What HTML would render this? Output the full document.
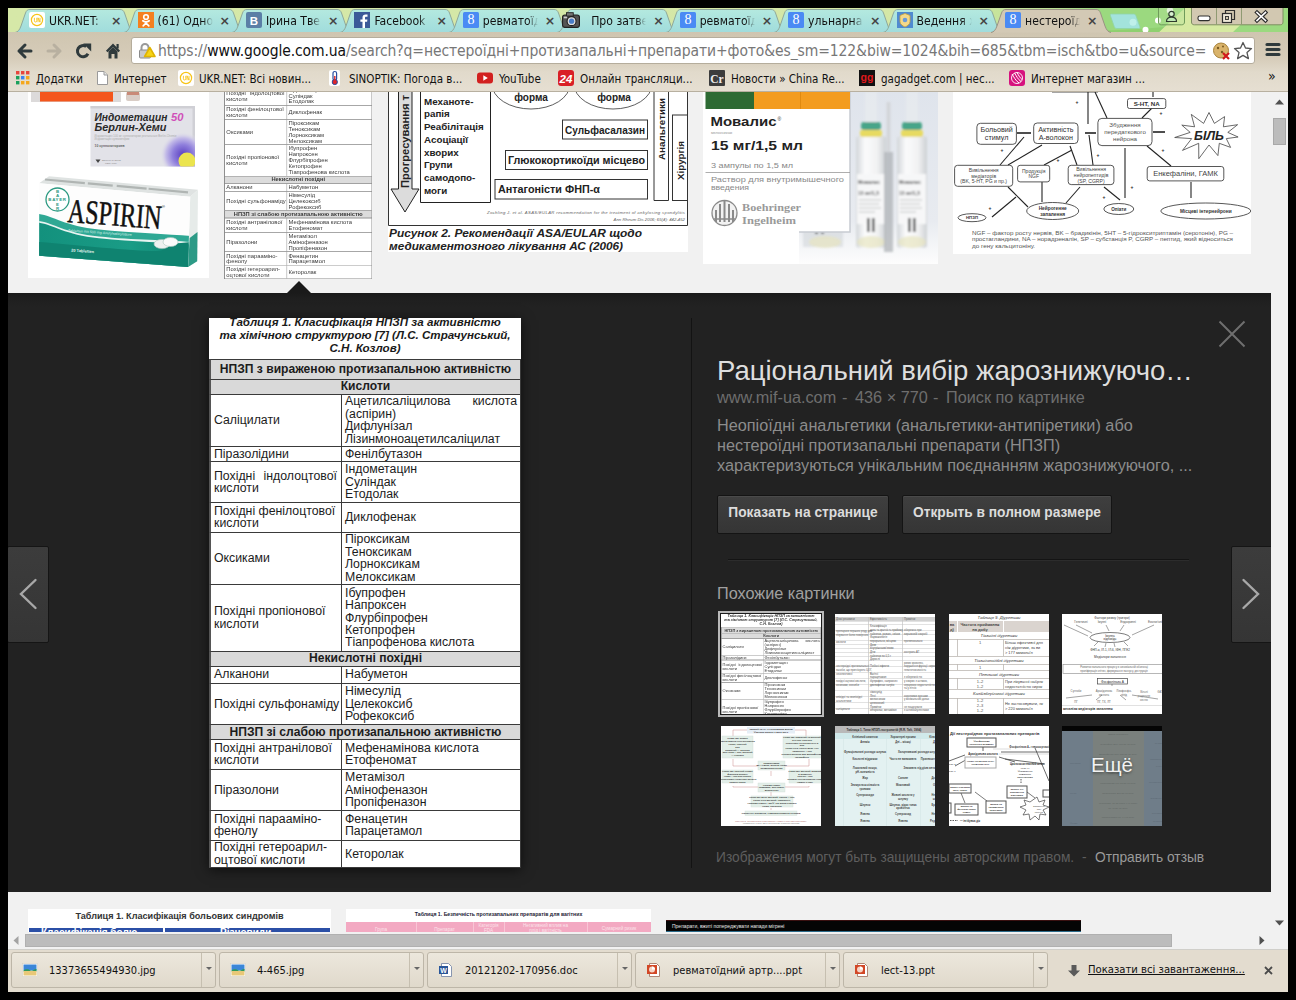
<!DOCTYPE html>
<html lang="uk">
<head>
<meta charset="utf-8">
<title>нестероїдні протизапальні препарати фото</title>
<style>
*{box-sizing:border-box;margin:0;padding:0}
html,body{width:1296px;height:1000px;overflow:hidden;background:#000}
body{position:relative;font-family:"Liberation Sans","DejaVu Sans",sans-serif;color:#000}
.abs{position:absolute}
#win{position:absolute;left:8px;top:8px;width:1280px;height:984px;overflow:hidden;background:#f1f1f1}
/* tab strip */
#tabs{position:absolute;left:0;top:0;width:1280px;height:25px;background:linear-gradient(90deg,#d6e8a8 0,#d4e7a6 900px,#bfe196 1040px,#9bd97f 1090px,#9bd97f 1280px)}
.tab{position:absolute;top:0;height:24px;width:124px}
.ts{position:absolute;left:0;top:0}
.tab .tt{position:absolute;left:34px;top:5.500px;font:12.1px "DejaVu Sans Condensed","DejaVu Sans","Liberation Sans",sans-serif;color:#111;white-space:nowrap;width:55px;overflow:hidden;-webkit-mask-image:linear-gradient(90deg,#000 82%,transparent 100%);mask-image:linear-gradient(90deg,#000 82%,transparent 100%)}
.tab .tx{position:absolute;left:96px;top:5px;font:bold 12.500px "DejaVu Sans","Liberation Sans",sans-serif;color:#444}
.fav{position:absolute;left:14px;top:4px;width:16px;height:16px}
/* toolbar */
#toolbar{position:absolute;left:0;top:24px;width:1280px;height:60px;background:linear-gradient(#cfc5b0 0,#d6ccb9 26px,#e1dacb 40px,#e6dfd2 60px);border-bottom:1px solid #b8b0a0}
#url{position:absolute;left:123px;top:5px;width:1124px;height:26.500px;background:#fff;border:1px solid #b5ad9c;border-radius:3px}
#urltext{position:absolute;left:26px;top:4px;font:15.5px "DejaVu Sans Condensed","DejaVu Sans","Liberation Sans",sans-serif;white-space:nowrap;color:#777;width:1060px;overflow:hidden;letter-spacing:-0.1px}
#urltext b{font-weight:normal;color:#111}
.bm{position:absolute;top:39.500px;font:11.5px "DejaVu Sans Condensed","DejaVu Sans","Liberation Sans",sans-serif;color:#111;white-space:nowrap}
.bmi{position:absolute;top:38px;width:16px;height:16px}
/* page */
#page{position:absolute;left:0;top:84px;width:1263px;height:840px;background:#f1f1f1;overflow:hidden}
#vscroll{position:absolute;left:1263px;top:84px;width:17px;height:840px;background:#f1f1f1}
#hscroll{position:absolute;left:0;top:924px;width:1280px;height:17px;background:#f1f1f1}
#dl{position:absolute;left:0;top:941px;width:1280px;height:43px;background:#e3dccf;border-top:1px solid #d0cfca}
.dli{position:absolute;top:2px;height:36px;border:1px solid #bdb6a8;border-radius:3px;background:linear-gradient(#ece7dc,#e0d9cb)}
.dli .nm{position:absolute;left:37px;top:10.500px;font:11px "DejaVu Sans Condensed","DejaVu Sans","Liberation Sans",sans-serif;color:#111;white-space:nowrap}
.dli .sep{position:absolute;right:13px;top:0;width:1px;height:34px;background:#c6bfb0}
.dli .ar{position:absolute;right:3.500px;top:14px;width:0;height:0;border:3px solid transparent;border-top:3.500px solid #666;border-bottom:0}
.dli .ic{position:absolute;left:10px;top:9px;width:16px;height:16px}
/* dark panel */
#panel{position:absolute;left:0;top:201px;width:1263px;height:599px;background:linear-gradient(#1a1a1a 0,#1f1f1f 6px,#222 14px,#222 100%)}

.bigimg{position:absolute;width:312px;height:550px;background:#fff;overflow:hidden;font:12.3px/12.45px "Liberation Sans",sans-serif;color:#1c1c1c}
.cap{position:absolute;left:0;top:-2px;width:312px;text-align:center;font:italic bold 11.6px/12.8px "Liberation Sans",sans-serif;color:#1a1a1a}
.th{position:absolute;left:0;width:312px;background:#d9d9d9;border:1px solid #3a3a3a;border-left:2px solid #555;font-weight:bold;font-size:12.1px;display:flex;align-items:center;justify-content:center;white-space:nowrap}
.tr{position:absolute;left:0;width:312px;border:1px solid #3a3a3a;border-left:2px solid #555;display:flex}
.c1{width:131px;border-right:1px solid #3a3a3a;padding-left:3px;display:flex;align-items:center;white-space:nowrap}
.c2{padding-left:3px;display:flex;align-items:center;white-space:nowrap}
.c1>div,.c2>div{display:block}
.j{display:inline-block;text-align:justify;text-align-last:justify;white-space:normal;vertical-align:top}
.c1 .j{width:123px}.c2 .j{width:172px}
#ptitle{position:absolute;left:709px;top:62px;font:27.5px/31px "Liberation Sans",sans-serif;color:#dedede;white-space:nowrap}
#psub{position:absolute;left:709px;top:94.5px;font:16.25px/18px "Liberation Sans",sans-serif;color:#6e6e6e;white-space:nowrap}
#psub span{position:absolute;top:0}
#pdesc{position:absolute;left:709px;top:121.5px;width:490px;font:16.25px/20.2px "Liberation Sans",sans-serif;color:#8c8c8c;white-space:nowrap}
.pbtn{position:absolute;top:202px;height:39px;border:1px solid #141414;border-radius:2px;background:linear-gradient(#3f3f3f,#353535);box-shadow:inset 0 1px 0 #4a4a4a;color:#dcdcdc;font:bold 13.75px/34px "Liberation Sans",sans-serif;text-align:center;white-space:nowrap}
#phr{position:absolute;left:720px;top:266px;width:461px;height:2px;background:#141414;border-bottom:1px solid #2c2c2c}
#psim{position:absolute;left:709px;top:291px;font:16.25px/18px "Liberation Sans",sans-serif;color:#a0a0a0;white-space:nowrap}
#pfoot{position:absolute;left:708px;top:557px;font:13.75px/16px "Liberation Sans",sans-serif;color:#5e5e5e;white-space:nowrap}
#pfoot span{position:absolute;top:0}
.nav{position:absolute;top:252.500px;width:42px;height:97px;background:linear-gradient(#3c3c3c,#353535);border:1px solid #151515;border-radius:2px}
.sth{position:absolute;width:100px;height:100px;background:#fff;overflow:hidden}
.mini .th,.mini .tr,.mini .c1{border-color:#8a8a8a}.mini .bigimg{color:#3a3a3a}.mini .cap{color:#333}.mini .th{background:#dcdcdc}
</style>
</head>
<body>
<div id="win">
  <div id="tabs"><svg width="0" height="0" style="position:absolute"><defs><linearGradient id="tg" x1="0" y1="0" x2="0" y2="1"><stop offset="0" stop-color="#b4e9df"/><stop offset="1" stop-color="#a0dcdc"/></linearGradient></defs></svg>
<!--TABS-->
<div class="tab" style="left:7.0px;"><svg class="ts" width="121" height="25" viewBox="0 0 121 25"><path d="M0 24.500C3 24 4.500 22 6 18L10.500 5C11.500 2.500 12.500 1.500 15 1.500H105C107.500 1.500 108.500 2.500 109.500 5L114 18C115.500 22 117 24 120 24.500" fill="url(#tg)" stroke="#8fa89a" stroke-width="1"/></svg><svg class="fav" viewBox="0 0 16 16"><rect width="16" height="16" rx="2" fill="#fff"/><circle cx="8" cy="8" r="5.6" fill="none" stroke="#f7c417" stroke-width="1.2"/><path d="M5.4 5.8v3a1.2 1.2 0 0 0 2.4 0v-3M9 10.2V5.800l2 4.400V5.800" fill="none" stroke="#f7c417" stroke-width="0.9"/></svg><div class="tt">UKR.NET:</div><div class="tx">×</div></div>
<div class="tab" style="left:115.5px;"><svg class="ts" width="121" height="25" viewBox="0 0 121 25"><path d="M0 24.500C3 24 4.500 22 6 18L10.500 5C11.500 2.500 12.500 1.500 15 1.500H105C107.500 1.500 108.500 2.500 109.500 5L114 18C115.500 22 117 24 120 24.500" fill="url(#tg)" stroke="#8fa89a" stroke-width="1"/></svg><svg class="fav" viewBox="0 0 16 16"><rect width="16" height="16" fill="#f4801f"/><circle cx="8" cy="5" r="2.3" fill="none" stroke="#fff" stroke-width="1.6"/><path d="M4.800 8.800c2 1.400 4.400 1.400 6.400 0M8 10v1.200M8 11l-2.800 2.800M8 11l2.800 2.800" fill="none" stroke="#fff" stroke-width="1.7" stroke-linecap="round"/></svg><div class="tt">(61) Одно</div><div class="tx">×</div></div>
<div class="tab" style="left:223.9px;"><svg class="ts" width="121" height="25" viewBox="0 0 121 25"><path d="M0 24.500C3 24 4.500 22 6 18L10.500 5C11.500 2.500 12.500 1.500 15 1.500H105C107.500 1.500 108.500 2.500 109.500 5L114 18C115.500 22 117 24 120 24.500" fill="url(#tg)" stroke="#8fa89a" stroke-width="1"/></svg><svg class="fav" viewBox="0 0 16 16"><rect width="16" height="16" rx="2" fill="#5b7fa6"/><text x="8" y="12.500" font-family="Liberation Sans,sans-serif" font-weight="bold" font-size="11.500" fill="#fff" text-anchor="middle">B</text></svg><div class="tt">Ірина Твер</div><div class="tx">×</div></div>
<div class="tab" style="left:332.4px;"><svg class="ts" width="121" height="25" viewBox="0 0 121 25"><path d="M0 24.500C3 24 4.500 22 6 18L10.500 5C11.500 2.500 12.500 1.500 15 1.500H105C107.500 1.500 108.500 2.500 109.500 5L114 18C115.500 22 117 24 120 24.500" fill="url(#tg)" stroke="#8fa89a" stroke-width="1"/></svg><svg class="fav" viewBox="0 0 16 16"><rect width="16" height="16" fill="#3b5998"/><path d="M11 16V9.800h2.100l.3-2.400H11V5.900c0-.7.200-1.200 1.200-1.200h1.300V2.500c-.2 0-1-.1-1.900-.1-1.900 0-3.100 1.100-3.100 3.200v1.800H6.400v2.400h2.100V16z" fill="#fff"/></svg><div class="tt">Facebook</div><div class="tx">×</div></div>
<div class="tab" style="left:440.8px;"><svg class="ts" width="121" height="25" viewBox="0 0 121 25"><path d="M0 24.500C3 24 4.500 22 6 18L10.500 5C11.500 2.500 12.500 1.500 15 1.500H105C107.500 1.500 108.500 2.500 109.500 5L114 18C115.500 22 117 24 120 24.500" fill="url(#tg)" stroke="#8fa89a" stroke-width="1"/></svg><svg class="fav" viewBox="0 0 16 16"><rect width="16" height="16" rx="1.500" fill="#4a8af4"/><text x="8" y="12.300" font-family="Liberation Serif,serif" font-size="14" fill="#fff" text-anchor="middle">8</text></svg><div class="tt">ревматоїд</div><div class="tx">×</div></div>
<div class="tab" style="left:549.2px;"><svg class="ts" width="121" height="25" viewBox="0 0 121 25"><path d="M0 24.500C3 24 4.500 22 6 18L10.500 5C11.500 2.500 12.500 1.500 15 1.500H105C107.500 1.500 108.500 2.500 109.500 5L114 18C115.500 22 117 24 120 24.500" fill="url(#tg)" stroke="#8fa89a" stroke-width="1"/></svg><svg class="fav" viewBox="0 0 16 16" style="left:5px;width:18px;height:18px;top:3px"><rect x="0.500" y="3.500" width="15" height="11" rx="2" fill="#555" stroke="#222"/><rect x="4" y="1.500" width="6" height="3" fill="#777" stroke="#222" stroke-width=".8"/><circle cx="8.500" cy="9" r="4" fill="#ddd" stroke="#222"/><circle cx="8.500" cy="9" r="2.300" fill="#4a7ec8"/><rect x="1.500" y="5" width="3" height="1.500" fill="#ccc"/></svg><div class="tt">Про затве</div><div class="tx">×</div></div>
<div class="tab" style="left:657.7px;"><svg class="ts" width="121" height="25" viewBox="0 0 121 25"><path d="M0 24.500C3 24 4.500 22 6 18L10.500 5C11.500 2.500 12.500 1.500 15 1.500H105C107.500 1.500 108.500 2.500 109.500 5L114 18C115.500 22 117 24 120 24.500" fill="url(#tg)" stroke="#8fa89a" stroke-width="1"/></svg><svg class="fav" viewBox="0 0 16 16"><rect width="16" height="16" rx="1.500" fill="#4a8af4"/><text x="8" y="12.300" font-family="Liberation Serif,serif" font-size="14" fill="#fff" text-anchor="middle">8</text></svg><div class="tt">ревматоїд</div><div class="tx">×</div></div>
<div class="tab" style="left:766.1px;"><svg class="ts" width="121" height="25" viewBox="0 0 121 25"><path d="M0 24.500C3 24 4.500 22 6 18L10.500 5C11.500 2.500 12.500 1.500 15 1.500H105C107.500 1.500 108.500 2.500 109.500 5L114 18C115.500 22 117 24 120 24.500" fill="url(#tg)" stroke="#8fa89a" stroke-width="1"/></svg><svg class="fav" viewBox="0 0 16 16"><rect width="16" height="16" rx="1.500" fill="#4a8af4"/><text x="8" y="12.300" font-family="Liberation Serif,serif" font-size="14" fill="#fff" text-anchor="middle">8</text></svg><div class="tt">ульнарна</div><div class="tx">×</div></div>
<div class="tab" style="left:874.6px;"><svg class="ts" width="121" height="25" viewBox="0 0 121 25"><path d="M0 24.500C3 24 4.500 22 6 18L10.500 5C11.500 2.500 12.500 1.500 15 1.500H105C107.500 1.500 108.500 2.500 109.500 5L114 18C115.500 22 117 24 120 24.500" fill="url(#tg)" stroke="#8fa89a" stroke-width="1"/></svg><svg class="fav" viewBox="0 0 16 16"><rect width="16" height="16" fill="#4f8ad0"/><path d="M8 1.500l5 2v6c0 3-3 4.500-5 5.500-2-1-5-2.500-5-5.500v-6z" fill="#f4d98a" stroke="#c9a23a" stroke-width=".8"/><circle cx="8" cy="8" r="2.300" fill="#6a9ad8"/></svg><div class="tt">Ведення х</div><div class="tx">×</div></div>
<div class="tab" style="left:983.1px;z-index:5;"><svg class="ts" width="121" height="25" viewBox="0 0 121 25"><path d="M0 24.500C3 24 4.500 22 6 18L10.500 5C11.500 2.500 12.500 1.500 15 1.500H105C107.500 1.500 108.500 2.500 109.500 5L114 18C115.500 22 117 24 120 24.500" fill="#d3c9b5" stroke="#9a9384" stroke-width="1"/></svg><svg class="fav" viewBox="0 0 16 16"><rect width="16" height="16" rx="1.500" fill="#4a8af4"/><text x="8" y="12.300" font-family="Liberation Serif,serif" font-size="14" fill="#fff" text-anchor="middle">8</text></svg><div class="tt">нестероїд</div><div class="tx">×</div></div>
<!--/TABS-->

<svg class="abs" style="left:1096px;top:0" width="184" height="25" viewBox="0 0 184 25">
  <rect x="-40" width="224" height="25" fill="#9bd97f"/>
  <path d="M54 25H128L154 0H81z" fill="#d6eaa2"/>
  <path d="M-40 25C-10 25 20 25 54 25L60 19C30 22 0 23 -40 23z" fill="#8fd070"/>
  <circle cx="66" cy="2.500" r="3.200" fill="#fff"/><circle cx="54" cy="12.600" r="3" fill="#fff"/><circle cx="41.500" cy="21.800" r="3" fill="#fff"/>
  <path d="M7.500 6H29.500C30.800 6 31.500 6.500 32 7.800L35.800 18.500C36.300 20 35.800 20.500 34.500 20.500H12.800C11.500 20.500 10.800 20 10.300 18.700L6.500 8C6 6.500 6.300 6 7.500 6z" fill="#a3e3dc" stroke="#8fd4a8" stroke-width=".8"/><circle cx="29" cy="14.200" r="3.500" fill="#bff0ea"/>
  <path d="M54.500 0V14c0 1.800 1 2.800 2.800 2.800H77.700c1.800 0 2.800-1 2.800-2.800V0" fill="#b5e39a" fill-opacity=".35" stroke="#6f9a5a" stroke-width="1"/>
  <circle cx="67.500" cy="6" r="2.700" fill="#d9f2d2" stroke="#2e3a2e" stroke-width="1.200"/><path d="M62.500 13.500c0-3.200 2.200-4.300 5-4.300s5 1.100 5 4.300z" fill="#bfe8b5" stroke="#2e3a2e" stroke-width="1.200" stroke-linejoin="round"/>
  <path d="M87.500 0V14c0 1.800 1 2.800 2.800 2.800H176.200c1.800 0 2.800-1 2.800-2.800V0" fill="#d2c8b1" stroke="#7f8f62" stroke-width="1"/>
  <path d="M112.500 0v16.500M137.500 0v16.500" stroke="#8f9a72" stroke-width="1"/>
  <rect x="94" y="8" width="12" height="4.600" rx="1.800" fill="#fff" stroke="#2e2e2e" stroke-width="1.100"/>
  <path d="M121.500 5.500v-3h9v9h-3" fill="none" stroke="#2e2e2e" stroke-width="1.200"/><rect x="118.500" y="5.500" width="9" height="9" fill="#efe9da" stroke="#2e2e2e" stroke-width="1.200"/><rect x="121.500" y="8.500" width="3" height="3" fill="#d2c8b1" stroke="#2e2e2e" stroke-width=".9"/>
  <path d="M153 4.500l8.500 8M161.500 4.500l-8.500 8" stroke="#2e2e2e" stroke-width="3.800" stroke-linecap="square"/><path d="M153 4.500l8.500 8M161.500 4.500l-8.500 8" stroke="#fff" stroke-width="1.600" stroke-linecap="square"/>
</svg>
</div>
  <div id="toolbar">
    <svg class="abs" style="left:8px;top:8.500px" width="112" height="20" viewBox="0 0 112 20">
      <path d="M3 10h12M3 10l6-6M3 10l6 6" fill="none" stroke="#2f3a3c" stroke-width="3" stroke-linecap="round" stroke-linejoin="round"/>
      <path d="M32 10h12M44 10l-6-6M44 10l-6 6" fill="none" stroke="#b8b0a0" stroke-width="3" stroke-linecap="round" stroke-linejoin="round"/>
      <g transform="translate(-4.300 0)"><path d="M76.300 12.800A5.600 5.600 0 1 1 74.500 5.500" fill="none" stroke="#2f3a3c" stroke-width="3"/>
      <path d="M71.500 2.500H79.500V10.500z" fill="#2f3a3c"/></g>
      <path d="M90.800 10.500L97 4.300l6.200 6.200" fill="none" stroke="#2f3a3c" stroke-width="2.400" stroke-linejoin="miter"/>
      <path d="M92.500 10.500l4.500-4.300 4.500 4.300V17.500h-3v-4.500h-3v4.500H92.500z" fill="#2f3a3c"/>
      <rect x="100.500" y="3" width="2.200" height="4.500" fill="#2f3a3c"/>
    </svg>
    <svg class="abs" style="left:1257px;top:9px" width="16" height="18" viewBox="0 0 16 18"><path d="M2 3.500h12M2 8.500h12M2 13.500h12" stroke="#2f3a3c" stroke-width="3.200" stroke-linecap="round"/></svg>
<svg class="bmi" style="left:8px" viewBox="0 0 16 16"><g><rect x="0" y="1" width="3.400" height="3.400" fill="#e8453c"/><rect x="5" y="1" width="3.400" height="3.400" fill="#e8453c"/><rect x="10" y="1" width="3.400" height="3.400" fill="#e8453c"/><rect x="0" y="6" width="3.400" height="3.400" fill="#1aa05b"/><rect x="5" y="6" width="3.400" height="3.400" fill="#3d83f0"/><rect x="10" y="6" width="3.400" height="3.400" fill="#f4a71c"/><rect x="0" y="11" width="3.400" height="3.400" fill="#1aa05b"/><rect x="5" y="11" width="3.400" height="3.400" fill="#f4a71c"/><rect x="10" y="11" width="3.400" height="3.400" fill="#f4a71c"/></g></svg><div class="bm" style="left:28px">Додатки</div>
<svg class="bmi" style="left:88px" viewBox="0 0 16 16"><path d="M1.500 1.500h6.500l3.500 3.500v9.500h-10z" fill="#fff" stroke="#9a9a9a"/><path d="M8 1.500v3.500h3.500" fill="#e6e6e6" stroke="#9a9a9a"/></svg><div class="bm" style="left:106px">Интернет</div>
<svg class="bmi" style="left:170px" viewBox="0 0 16 16"><rect width="16" height="16" rx="2" fill="#fff"/><circle cx="8" cy="8" r="5.600" fill="none" stroke="#f7c417" stroke-width="1.200"/><path d="M5.400 5.800v3a1.200 1.200 0 0 0 2.400 0v-3M9 10.200V5.800l2 4.400V5.800" fill="none" stroke="#f7c417" stroke-width="0.900"/></svg><div class="bm" style="left:191px">UKR.NET: Всі новин...</div>
<svg class="bmi" style="left:320px" viewBox="0 0 16 16"><rect x="1" y="0" width="11" height="16" rx="2" fill="#fff"/><rect x="5" y="1.500" width="3.600" height="9" rx="1.800" fill="#fff" stroke="#2a4fa0" stroke-width="1.200"/><circle cx="6.800" cy="12" r="2.600" fill="#e0262b" stroke="#2a4fa0" stroke-width="1"/><rect x="6.100" y="6" width="1.400" height="5" fill="#e0262b"/></svg><div class="bm" style="left:341px">SINOPTIK: Погода в...</div>
<svg class="bmi" style="left:469px" viewBox="0 0 16 16"><rect x="0" y="2.500" width="16" height="11" rx="3" fill="#d2201f"/><path d="M6.300 5.200l4.500 2.800-4.500 2.800z" fill="#fff"/></svg><div class="bm" style="left:491px">YouTube</div>
<svg class="bmi" style="left:550px" viewBox="0 0 16 16"><rect width="16" height="16" rx="3" fill="#d91f26"/><text x="8" y="12.500" font-family="Liberation Sans,sans-serif" font-weight="bold" font-style="italic" font-size="11.500" fill="#fff" text-anchor="middle">24</text></svg><div class="bm" style="left:572px">Онлайн трансляци...</div>
<svg class="bmi" style="left:701px" viewBox="0 0 16 16"><rect width="16" height="16" rx="1" fill="#3c3c3c"/><text x="8" y="12.500" font-family="Liberation Serif,serif" font-weight="bold" font-size="11.500" fill="#eee" text-anchor="middle">Cr</text></svg><div class="bm" style="left:723px">Новости » China Re...</div>
<svg class="bmi" style="left:851px" viewBox="0 0 16 16"><rect width="16" height="16" fill="#111"/><text x="8" y="11" font-family="Liberation Sans,sans-serif" font-weight="bold" font-size="10.500" fill="#e0181c" text-anchor="middle">gg</text></svg><div class="bm" style="left:873px">gagadget.com | нес...</div>
<svg class="bmi" style="left:1001px" viewBox="0 0 16 16"><rect width="16" height="16" rx="3" fill="#d6127e"/><path d="M3 4c2 3 3 6 7 9M5.500 3c2 3 3 6 6.500 8.500M8 2.500c1.500 2.500 2.500 5 5 7" fill="none" stroke="#fff" stroke-width="1"/><circle cx="8" cy="8" r="5.500" fill="none" stroke="#fff" stroke-width=".9"/></svg><div class="bm" style="left:1023px">Интернет магазин ...</div>
<div class="bm" style="left:1260px;top:36px;font-size:14px">»</div>

    <div id="url"><svg class="abs" style="left:5px;top:4px" width="20" height="18" viewBox="0 0 20 18"><path d="M4.500 8V5.500a3.500 3.500 0 0 1 7 0V8" fill="none" stroke="#9a9a9a" stroke-width="2"/><rect x="2.500" y="8" width="11" height="8" rx="1" fill="#c9c9c9" stroke="#8a8a8a"/><path d="M12.800 5.500l5.200 9h-10.400z" fill="#f7d417" stroke="#e0b400" stroke-width="1.600" stroke-linejoin="round"/></svg>
<svg class="abs" style="left:1080px;top:3px" width="42" height="20" viewBox="0 0 42 20"><circle cx="9" cy="9.500" r="7.500" fill="#d9b36a" stroke="#a8823a"/><circle cx="6" cy="7" r="1.200" fill="#7a5a22"/><circle cx="10" cy="11" r="1.200" fill="#7a5a22"/><circle cx="11" cy="5.500" r="1" fill="#7a5a22"/><path d="M11 12l6 6M17 12l-6 6" stroke="#d0181b" stroke-width="2.200"/><path d="M31 1.500l2.500 5.500 6 .6-4.500 4 1.400 6-5.400-3.200-5.400 3.200 1.400-6-4.500-4 6-.6z" fill="#fff" stroke="#555" stroke-width="1.300" stroke-linejoin="round"/></svg><div id="urltext">https://<b>www.google.com.ua</b>/search?q=нестероїдні+протизапальні+препарати+фото&amp;es_sm=122&amp;biw=1024&amp;bih=685&amp;tbm=isch&amp;tbo=u&amp;source=</div></div>
  </div>
  <div id="page">
<!--TOP-->
<svg class="abs" style="left:20px;top:0px" width="181" height="186" viewBox="0 0 181 186" font-family="Liberation Sans,sans-serif"><defs><radialGradient id="pg" cx=".5" cy=".5" r=".5"><stop offset="0" stop-color="#5a3fc0"/><stop offset=".45" stop-color="#8f7fdc"/><stop offset=".75" stop-color="#c4bce8"/><stop offset="1" stop-color="#e2e2e8" stop-opacity="0"/></radialGradient><linearGradient id="ag" x1="0" y1="0" x2="1" y2="0"><stop offset="0" stop-color="#13917d"/><stop offset=".6" stop-color="#1a9c86"/><stop offset="1" stop-color="#0f826f"/></linearGradient></defs><rect width="181" height="186" fill="#fff"/><rect x="3" y="0" width="90" height="10" fill="#dcdada"/><rect x="12" y="0" width="73" height="9.500" fill="#f4561c"/><rect x="98" y="0" width="14" height="9" rx="2" fill="#d9cdc6"/><rect x="99" y="0" width="12" height="3" fill="#c98a78"/><clipPath id="ib"><rect x="62.500" y="14" width="104.500" height="60.500"/></clipPath><rect x="62.500" y="14" width="104.500" height="60.500" fill="#e2e2e8"/><rect x="62.500" y="14" width="104.500" height="2.500" fill="#cfcfd4"/><rect x="164.500" y="14" width="2.500" height="60.500" fill="#d0d0d6"/><g clip-path="url(#ib)"><circle cx="155" cy="63" r="23" fill="url(#pg)"/><circle cx="159" cy="69" r="8.500" fill="#ebe44e"/></g><text x="66.500" y="29" font-size="10" font-weight="bold" font-style="italic" fill="#2a2a2a" textLength="73" lengthAdjust="spacingAndGlyphs">Индометацин</text><text x="143" y="29" font-size="10" font-weight="bold" font-style="italic" fill="#d050b8" textLength="12.500" lengthAdjust="spacingAndGlyphs">50</text><text x="66.500" y="38.700" font-size="10" font-weight="bold" font-style="italic" fill="#2a2a2a" textLength="72" lengthAdjust="spacingAndGlyphs">Берлин-Хеми</text><text x="66.500" y="44.500" font-size="2.700" fill="#aaa" textLength="82">Индометацин 100 мг суппозитории ректальные Berlin-Chemie</text><text x="66.500" y="47.800" font-size="2.700" fill="#aaa">Индометацин суппозитории</text><text x="66.500" y="54.500" font-size="3.400" font-weight="bold" fill="#666">10 суппозиториев</text><path d="M67.500 67.500l2.500 3.500 2.500-3.500z" fill="#444"/><text x="74" y="68.500" font-size="2.400" fill="#888">BERLIN-CHEMIE</text><text x="77" y="71.500" font-size="2.400" fill="#888">MENARINI</text><path d="M11.200 91.300L21 84.300 170 97.700 162.200 104.700z" fill="#dfe3e2"/><path d="M17 87.500L160 100.300" stroke="#8a908e" stroke-width="2.200" stroke-dasharray="40 3 25 4 30 2" opacity=".55"/><path d="M162.200 104.700L170 97.700 169.200 169.300 160 175z" fill="#e6ebe9"/><path d="M161.700 146L169.500 140 169.200 169.300 160 175z" fill="#2c9a86"/><path d="M11.200 91.300L162.200 104.700 160 175 11.200 163.700z" fill="#fdfdfd"/><clipPath id="af"><path d="M11.200 91.300L162.200 104.700 160 175 11.200 163.700z"/></clipPath><g clip-path="url(#af)"><path d="M11 122c14 2 26 12 60 15.500S140 142 163 144v35H11z" fill="#2fa894"/><path d="M11 129c14 2 26 12 60 15.500S140 148 163 150v30H11z" fill="#e8f4f1"/><path d="M11 130.800c14 2 26 12 60 15.500S140 150.500 163 152.500v30H11z" fill="url(#ag)"/><path d="M11 150c40 3 90 9 118 9 8 0 10-5 14-7l20-2v30H11z" fill="#0f8370"/></g><ellipse cx="134" cy="152" rx="8" ry="4.600" fill="#eef1f0" stroke="#a9c4bc" stroke-width=".6"/><ellipse cx="142.500" cy="150" rx="7.500" ry="4.500" fill="#fafafa" stroke="#a9c4bc" stroke-width=".6"/><circle cx="29.500" cy="107.500" r="11.500" fill="#fff" stroke="#2c9a82" stroke-width="1.300"/><text x="29.500" y="109" font-size="4.400" font-weight="bold" fill="#2c9a82" text-anchor="middle" letter-spacing=".7">BAYER</text><text font-size="4.400" font-weight="bold" fill="#2c9a82" text-anchor="middle"><tspan x="29.500" y="100.500">B</tspan><tspan x="29.500" y="104.700">A</tspan><tspan x="29.500" y="113.500">E</tspan><tspan x="29.500" y="117.800">R</tspan></text><text x="39" y="130" font-family="Liberation Serif,serif" font-size="34" fill="#111" stroke="#111" stroke-width=".5" textLength="94" lengthAdjust="spacingAndGlyphs" transform="rotate(4.300 39 130)">ASPIRIN</text><text x="134" y="116" font-size="4" fill="#111">®</text><text x="40" y="139.500" font-size="3.600" fill="#d8f0ea" transform="rotate(4 40 139)" textLength="64">Tabletten mit 500 mg Acetylsalicylsäure</text><text x="43" y="159.500" font-size="4" font-weight="bold" fill="#e4f4f0" transform="rotate(4 43 159)">20 Tabletten</text></svg>
<div class="abs mini" style="left:216px;top:0;width:148px;height:186.500px;overflow:hidden;background:#fff"><div class="bigimg" style="left:0;top:-74.500px;transform:scale(.4744);transform-origin:0 0"><div class="cap">Таблиця 1. Класифікація НПЗП за активністю<br>та хімічною структурою [7] (Л.С. Страчунський,<br>С.Н. Козлов)</div>
<div class="th" style="top:40.5px;height:21.2px">НПЗП з вираженою протизапальною активністю</div>
<div class="th" style="top:60.7px;height:15.9px">Кислоти</div>
<div class="tr" style="top:75.6px;height:53.4px"><div class="c1"><div>Саліцилати</div></div><div class="c2"><div><span class=j>Ацетилсаліцилова кислота</span><br>(аспірин)<br>Дифлунізал<br>Лізинмоноацетилсаліцилат</div></div></div>
<div class="tr" style="top:128.0px;height:16.4px"><div class="c1"><div>Піразолідини</div></div><div class="c2"><div>Фенілбутазон</div></div></div>
<div class="tr" style="top:143.4px;height:41.2px"><div class="c1"><div><span class=j>Похідні індолоцтової</span><br>кислоти</div></div><div class="c2"><div>Індометацин<br>Суліндак<br>Етодолак</div></div></div>
<div class="tr" style="top:183.6px;height:31.0px"><div class="c1"><div>Похідні фенілоцтової<br>кислоти</div></div><div class="c2"><div>Диклофенак</div></div></div>
<div class="tr" style="top:213.6px;height:53.4px"><div class="c1"><div>Оксиками</div></div><div class="c2"><div>Піроксикам<br>Теноксикам<br>Лорноксикам<br>Мелоксикам</div></div></div>
<div class="tr" style="top:266.0px;height:67.5px"><div class="c1"><div>Похідні пропіонової<br>кислоти</div></div><div class="c2"><div>Ібупрофен<br>Напроксен<br>Флурбіпрофен<br>Кетопрофен<br>Тіапрофенова кислота</div></div></div>
<div class="th" style="top:332.5px;height:16.3px">Некислотні похідні</div>
<div class="tr" style="top:347.8px;height:17.8px"><div class="c1"><div>Алканони</div></div><div class="c2"><div>Набуметон</div></div></div>
<div class="tr" style="top:364.6px;height:42.4px"><div class="c1"><div>Похідні сульфонаміду</div></div><div class="c2"><div>Німесулід<br>Целекоксиб<br>Рофекоксиб</div></div></div>
<div class="th" style="top:406.0px;height:16.0px">НПЗП зі слабою протизапальною активністю</div>
<div class="tr" style="top:421.0px;height:30.7px"><div class="c1"><div>Похідні антранілової<br>кислоти</div></div><div class="c2"><div>Мефенамінова кислота<br>Етофеномат</div></div></div>
<div class="tr" style="top:450.7px;height:42.1px"><div class="c1"><div>Піразолони</div></div><div class="c2"><div>Метамізол<br>Амінофеназон<br>Пропіфеназон</div></div></div>
<div class="tr" style="top:491.8px;height:30.8px"><div class="c1"><div>Похідні парааміно-<br>фенолу</div></div><div class="c2"><div>Фенацетин<br>Парацетамол</div></div></div>
<div class="tr" style="top:521.6px;height:28.4px"><div class="c1"><div>Похідні гетероарил-<br>оцтової кислоти</div></div><div class="c2"><div>Кеторолак</div></div></div>
</div></div>
<svg class="abs" style="left:380px;top:0px" width="300" height="160" viewBox="0 0 300 160" font-family="Liberation Sans,sans-serif"><rect width="300" height="160" fill="#fff"/><path d="M0.500 0V133.500H299.500V0" fill="none" stroke="#333" stroke-width="1"/><path d="M10.500 0V97H3L17 120 31 97H24V0" fill="#dcdcdc" stroke="#222" stroke-width="1"/><text transform="translate(21 96) rotate(-90)" font-size="10.500" font-weight="bold" fill="#222" textLength="93" lengthAdjust="spacingAndGlyphs">Прогресування т</text><path d="M32.500 0V110.500H102.500V0" fill="none" stroke="#222" stroke-width="1"/><text x="36" y="12.5" font-size="9.800" font-weight="bold" fill="#222">Механоте-</text><text x="36" y="25.2" font-size="9.800" font-weight="bold" fill="#222">рапія</text><text x="36" y="38.0" font-size="9.800" font-weight="bold" fill="#222">Реабілітація</text><text x="36" y="50.8" font-size="9.800" font-weight="bold" fill="#222">Асоціації</text><text x="36" y="63.5" font-size="9.800" font-weight="bold" fill="#222">хворих</text><text x="36" y="76.2" font-size="9.800" font-weight="bold" fill="#222">Групи</text><text x="36" y="89.0" font-size="9.800" font-weight="bold" fill="#222">самодопо-</text><text x="36" y="101.8" font-size="9.800" font-weight="bold" fill="#222">моги</text><ellipse cx="143" cy="-8" rx="39" ry="25" fill="none" stroke="#333" stroke-width=".8"/><ellipse cx="225" cy="-8" rx="39" ry="25" fill="none" stroke="#333" stroke-width=".8"/><text x="143" y="8.500" font-size="10" font-weight="bold" fill="#222" text-anchor="middle">форма</text><text x="226" y="8.500" font-size="10" font-weight="bold" fill="#222" text-anchor="middle">форма</text><rect x="174.500" y="28" width="85" height="19" fill="#fff" stroke="#333" stroke-width="1"/><text x="217" y="41.500" font-size="10" font-weight="bold" fill="#222" text-anchor="middle" textLength="80" lengthAdjust="spacingAndGlyphs">Сульфасалазин</text><rect x="117.500" y="58.500" width="142" height="19" fill="#fff" stroke="#333" stroke-width="1"/><text x="188.500" y="72" font-size="10" font-weight="bold" fill="#222" text-anchor="middle" textLength="137" lengthAdjust="spacingAndGlyphs">Глюкокортикоїди місцево</text><rect x="107" y="87.500" width="152.500" height="19.500" fill="#fff" stroke="#333" stroke-width="1"/><text x="110" y="101" font-size="10" font-weight="bold" fill="#222" textLength="102" lengthAdjust="spacingAndGlyphs">Антагоністи ФНП-α</text><path d="M266 0V108.500H280.500V0" fill="none" stroke="#333" stroke-width="1"/><text transform="translate(277 68) rotate(-90)" font-size="9.500" font-weight="bold" fill="#222" textLength="62" lengthAdjust="spacingAndGlyphs">Анальгетики</text><rect x="284.500" y="23" width="15" height="85.500" fill="#fff" stroke="#333" stroke-width="1"/><text transform="translate(296 88) rotate(-90)" font-size="9.500" font-weight="bold" fill="#222" textLength="39" lengthAdjust="spacingAndGlyphs">Хірургія</text><text x="297" y="122" font-size="4.300" font-style="italic" fill="#666" text-anchor="end" textLength="198">Zochling J. et al. ASAS/EULAR recommendation for the treatment of ankylosing spondylitis</text><text x="297" y="128.500" font-size="4.300" font-style="italic" fill="#666" text-anchor="end">Ann Rheum Dis 2006; 65(4): 442-452</text><text x="1" y="145" font-size="11.300" font-weight="bold" font-style="italic" fill="#222" textLength="253" lengthAdjust="spacingAndGlyphs">Рисунок 2. Рекомендації ASA/EULAR щодо</text><text x="1" y="157.500" font-size="11.300" font-weight="bold" font-style="italic" fill="#222" textLength="234" lengthAdjust="spacingAndGlyphs">медикаментозного лікування АС (2006)</text></svg>
<svg class="abs" style="left:695px;top:0px" width="235" height="172" viewBox="0 0 235 172" font-family="Liberation Sans,sans-serif"><defs><linearGradient id="mb" x1="0" y1="0" x2="0" y2="1"><stop offset="0" stop-color="#dfe4ec"/><stop offset=".75" stop-color="#e8ebf0"/><stop offset="1" stop-color="#fdfdfd"/></linearGradient><linearGradient id="amp" x1="0" y1="0" x2="1" y2="0"><stop offset="0" stop-color="#cfd3d6"/><stop offset=".3" stop-color="#fff"/><stop offset=".7" stop-color="#f4f4f4"/><stop offset="1" stop-color="#c9cdd0"/></linearGradient></defs><rect width="235" height="172" fill="#fff"/><rect x="96" y="0" width="139" height="172" fill="url(#mb)"/><filter id="bl" x="-10%" y="-10%" width="120%" height="120%"><feGaussianBlur stdDeviation="1.1"/></filter><g filter="url(#bl)" opacity=".85"><rect x="162" y="0" width="12" height="34" fill="#e9ecef" opacity=".8"/><rect x="153" y="44" width="30" height="112" rx="3" fill="url(#amp)"/><rect x="158" y="30" width="20" height="8" rx="3" fill="#2f9a78"/><rect x="157" y="38" width="22" height="7" rx="2" fill="#e9d94a"/><rect x="154" y="82" width="28" height="50" fill="#fafafa"/><text x="155" y="92" font-size="5" font-weight="bold" fill="#333">Мовалис</text><text x="155" y="103" font-size="5" font-weight="bold" fill="#333">15 мг/1,5</text><path d="M156 108h22M156 112h20M156 116h22M156 120h16" stroke="#bbb" stroke-width="1"/><rect x="164" y="126" width="2.500" height="14" fill="#222"/><rect x="169" y="126" width="2.500" height="14" fill="#222"/><ellipse cx="168" cy="150" rx="14" ry="6" fill="#e6e2b8" opacity=".7"/><rect x="203" y="0" width="12" height="34" fill="#e9ecef" opacity=".8"/><rect x="194" y="44" width="30" height="112" rx="3" fill="url(#amp)"/><rect x="199" y="30" width="20" height="8" rx="3" fill="#2f9a78"/><rect x="198" y="38" width="22" height="7" rx="2" fill="#e9d94a"/><rect x="195" y="82" width="28" height="50" fill="#fafafa"/><text x="196" y="92" font-size="5" font-weight="bold" fill="#333">Мовалис</text><text x="196" y="103" font-size="5" font-weight="bold" fill="#333">15 мг/1,5</text><path d="M197 108h22M197 112h20M197 116h22M197 120h16" stroke="#bbb" stroke-width="1"/><rect x="205" y="126" width="2.500" height="14" fill="#222"/><rect x="210" y="126" width="2.500" height="14" fill="#222"/><ellipse cx="209" cy="150" rx="14" ry="6" fill="#e6e2b8" opacity=".7"/><rect x="181" y="60" width="9" height="100" fill="#a9adb0" opacity=".8"/><path d="M185.500 10V60" stroke="#d0d3d6" stroke-width="4"/><rect x="100" y="125" width="40" height="30" fill="#c9cdd2" opacity=".55"/><rect x="112" y="130" width="3" height="12" fill="#222" opacity=".8"/><rect x="118" y="130" width="3" height="12" fill="#222" opacity=".7"/><ellipse cx="122" cy="150" rx="16" ry="6" fill="#e6e2b8" opacity=".7"/></g><rect x="2.500" y="0" width="144.500" height="140" fill="#fff"/><path d="M147 0V140H96" fill="none" stroke="#c8ccd2" stroke-width="1.500"/><rect x="2.500" y="0" width="48.500" height="17" fill="#2d6a33"/><rect x="51" y="0" width="96" height="17" fill="#f39c1f"/><path d="M97.500 0V17" stroke="#e08a10" stroke-width="1"/><text x="7.500" y="34" font-size="13" font-weight="bold" fill="#222" textLength="66" lengthAdjust="spacingAndGlyphs">Мовалис</text><text x="74.500" y="29" font-size="5" fill="#333">®</text><text x="8" y="42" font-size="3.800" fill="#999">мелоксикам</text><text x="8" y="57.500" font-size="13" font-weight="bold" fill="#222" textLength="92" lengthAdjust="spacingAndGlyphs">15 мг/1,5 мл</text><text x="8" y="76" font-size="7.300" fill="#888" textLength="82" lengthAdjust="spacingAndGlyphs">3 ампулы по 1,5 мл</text><path d="M2.500 80.500H147" stroke="#999" stroke-width=".8"/><text x="8" y="89.500" font-size="7.500" fill="#8a8a8a" textLength="133" lengthAdjust="spacingAndGlyphs">Раствор для внутримышечного</text><text x="8" y="97.500" font-size="7.500" fill="#8a8a8a" textLength="38" lengthAdjust="spacingAndGlyphs">введения</text><circle cx="21.500" cy="121" r="12.500" fill="#f2f2f2" stroke="#8a8a8a" stroke-width="1.300"/><path d="M13 130V118M17 130V112M21.500 130V108M26 130V112M30 130V118" stroke="#8a8a8a" stroke-width="2"/><path d="M11 127H32" stroke="#8a8a8a" stroke-width="1.500"/><text x="39" y="119" font-family="Liberation Serif,serif" font-size="11" font-weight="bold" fill="#9a9a9a" textLength="59" lengthAdjust="spacingAndGlyphs">Boehringer</text><text x="39" y="132" font-family="Liberation Serif,serif" font-size="11" font-weight="bold" fill="#9a9a9a" textLength="54" lengthAdjust="spacingAndGlyphs">Ingelheim</text></svg>
<svg class="abs" style="left:945px;top:0px" width="298" height="162" viewBox="0 0 298 162" font-family="Liberation Sans,sans-serif"><rect width="298" height="162" fill="#fff"/><path d="M99.0 0.0 L145.0 0.0" fill="none" stroke="#222" stroke-width="0.8"/><path d="M135.0 0.0 L135.0 32.0" fill="none" stroke="#222" stroke-width="1.1"/><path d="M142.0 0.0 L154.0 26.0" fill="none" stroke="#222" stroke-width="1.1"/><path d="M200.0 0.0 L200.0 5.0" fill="none" stroke="#222" stroke-width="1.1"/><path d="M189.0 26.0 L199.0 16.0" fill="none" stroke="#222" stroke-width="1.1"/><path d="M64.0 41.0 L78.0 41.0" fill="none" stroke="#222" stroke-width="1.6"/><path d="M132.0 41.0 L143.0 41.0" fill="none" stroke="#222" stroke-width="1.6"/><path d="M200.0 40.0 L212.0 40.0" fill="none" stroke="#222" stroke-width="1.6"/><path d="M47.0 73.0 L71.0 45.0" fill="none" stroke="#222" stroke-width="1.1"/><path d="M55.0 73.0 L89.0 53.0" fill="none" stroke="#222" stroke-width="1.1"/><path d="M91.0 73.0 L119.0 58.0" fill="none" stroke="#222" stroke-width="1.1"/><path d="M124.0 73.0 L117.0 54.0" fill="none" stroke="#222" stroke-width="1.1"/><path d="M140.0 73.0 L136.0 43.0" fill="none" stroke="#222" stroke-width="1.1"/><path d="M172.0 106.0 L172.0 56.0" fill="none" stroke="#222" stroke-width="1.1"/><path d="M194.0 54.0 L218.0 74.0" fill="none" stroke="#222" stroke-width="1.1"/><path d="M238.0 90.0 L238.0 106.0" fill="none" stroke="#222" stroke-width="1.1"/><path d="M89.0 90.0 L89.0 110.0" fill="none" stroke="#222" stroke-width="1.1"/><path d="M113.0 111.0 L127.0 95.0" fill="none" stroke="#222" stroke-width="1.1"/><path d="M151.0 95.0 L167.0 108.0" fill="none" stroke="#222" stroke-width="1.1"/><path d="M55.0 95.0 L75.0 115.0" fill="none" stroke="#222" stroke-width="1.1"/><path d="M39.0 125.0 L63.0 105.0" fill="none" stroke="#222" stroke-width="1.1"/><rect x="174.5" y="6.6" width="38.3" height="9.9" rx="2" fill="#fff" stroke="#444" stroke-width=".9"/><text x="193.7" y="13.8" font-size="6.2" text-anchor="middle" fill="#333" font-weight="bold">S-HT, NA</text><rect x="23.9" y="31.3" width="39.5" height="21.0" rx="3.5" fill="#fff" stroke="#444" stroke-width=".9"/><text x="43.6" y="40.3" font-size="7.2" text-anchor="middle" fill="#333">Больовий</text><text x="43.6" y="48.4" font-size="7.2" text-anchor="middle" fill="#333">стимул</text><rect x="80.7" y="31.0" width="44.3" height="20.5" rx="3.5" fill="#fff" stroke="#444" stroke-width=".9"/><text x="102.8" y="39.8" font-size="7.2" text-anchor="middle" fill="#333">Активність</text><text x="102.8" y="47.9" font-size="7.2" text-anchor="middle" fill="#333">А-волокон</text><rect x="144.9" y="26.4" width="54.1" height="27.2" rx="4" fill="#fff" stroke="#444" stroke-width=".9"/><text x="172.0" y="35.3" font-size="6.2" text-anchor="middle" fill="#555">Збудження</text><text x="172.0" y="42.2" font-size="6.2" text-anchor="middle" fill="#555">передаткового</text><text x="172.0" y="49.2" font-size="6.2" text-anchor="middle" fill="#555">нейрона</text><rect x="1.6" y="73.3" width="58.1" height="21.0" rx="3" fill="#fff" stroke="#444" stroke-width=".9"/><text x="30.7" y="79.9" font-size="5.1" text-anchor="middle" fill="#444">Вивільнення</text><text x="30.7" y="85.6" font-size="5.1" text-anchor="middle" fill="#444">медіаторів</text><text x="30.7" y="91.3" font-size="5.1" text-anchor="middle" fill="#444">(BK, 5-HT, PG и пр.)</text><rect x="64.6" y="73.3" width="32.1" height="16.6" rx="2.5" fill="#fff" stroke="#444" stroke-width=".9"/><text x="80.7" y="80.6" font-size="5" text-anchor="middle" fill="#444">Продукція</text><text x="80.7" y="86.2" font-size="5" text-anchor="middle" fill="#444">NGF</text><rect x="115.2" y="73.3" width="45.7" height="19.3" rx="3" fill="#fff" stroke="#444" stroke-width=".9"/><text x="138.1" y="79.1" font-size="5.1" text-anchor="middle" fill="#444">Вивільнення</text><text x="138.1" y="84.8" font-size="5.1" text-anchor="middle" fill="#444">нейропептидів</text><text x="138.1" y="90.5" font-size="5.1" text-anchor="middle" fill="#444">(SP, CGRP)</text><rect x="194.2" y="74.5" width="76.6" height="14.4" rx="2.5" fill="#fff" stroke="#444" stroke-width=".9"/><text x="232.5" y="84.4" font-size="7.5" text-anchor="middle" fill="#444">Енкефаліни, ГАМК</text><path d="M256.0 20.5L261.4 31.4L271.6 24.6L270.4 34.8L284.6 32.7L274.8 40.4L285.1 45.0L273.3 46.6L277.6 55.4L266.3 51.3L264.9 63.6L256.0 53.0L245.8 66.7L245.7 51.3L229.5 58.4L238.7 46.6L221.7 45.5L237.2 40.4L228.8 33.1L241.6 34.8L238.3 22.4L250.6 31.4z" fill="#fff" stroke="#444" stroke-width=".8"/><text x="256" y="47.500" font-size="12.500" font-style="italic" font-weight="bold" fill="#222" text-anchor="middle">БІЛЬ</text><ellipse cx="19.0" cy="125.7" rx="14" ry="4" fill="#fff" stroke="#444" stroke-width=".9"/><text x="19.0" y="127.3" font-size="4.3" font-weight="bold" text-anchor="middle" fill="#333">НПЗП</text><ellipse cx="99.7" cy="119.0" rx="26" ry="8.5" fill="#fff" stroke="#444" stroke-width=".9"/><text x="99.7" y="118.0" font-size="4.8" font-weight="bold" text-anchor="middle" fill="#333">Нейрогенне</text><text x="99.7" y="123.5" font-size="4.8" font-weight="bold" text-anchor="middle" fill="#333">запалення</text><ellipse cx="165.8" cy="117.0" rx="15" ry="5.5" fill="#fff" stroke="#444" stroke-width=".9"/><text x="165.8" y="118.7" font-size="4.6" font-weight="bold" text-anchor="middle" fill="#333">Опіати</text><ellipse cx="252.8" cy="119.0" rx="45" ry="8" fill="#fff" stroke="#444" stroke-width=".9"/><text x="252.8" y="120.8" font-size="4.8" font-weight="bold" text-anchor="middle" fill="#333">Місцеві інтернейрони</text><text x="124" y="12" font-size="5" font-weight="bold" fill="#222" text-anchor="middle">+</text><text x="208" y="23" font-size="5" font-weight="bold" fill="#222" text-anchor="middle">+</text><text x="49" y="60" font-size="5" font-weight="bold" fill="#222" text-anchor="middle">+</text><text x="105" y="70" font-size="5" font-weight="bold" fill="#222" text-anchor="middle">+</text><text x="145" y="65" font-size="5" font-weight="bold" fill="#222" text-anchor="middle">+</text><text x="210" y="60" font-size="5" font-weight="bold" fill="#222" text-anchor="middle">+</text><text x="179" y="97" font-size="5" font-weight="bold" fill="#222" text-anchor="middle">+</text><text x="37" y="118" font-size="5" font-weight="bold" fill="#222" text-anchor="middle">+</text><text x="151" y="107" font-size="5" font-weight="bold" fill="#222" text-anchor="middle">+</text><text x="19" y="142.5" font-size="6" fill="#555" textLength="261" lengthAdjust="spacingAndGlyphs">NGF – фактор росту нервів, BK – брадикінін, 5HT – 5-гідрокситриптамін (серотонін), PG –</text><text x="19" y="149.3" font-size="6" fill="#555" textLength="261" lengthAdjust="spacingAndGlyphs">простагландини, NA – норадреналін, SP – субстанція P, CGRP – пептид, який відноситься</text><text x="19" y="156.1" font-size="6" fill="#555" textLength="63" lengthAdjust="spacingAndGlyphs">до гену кальцитоніну.</text></svg>
<div class="abs" style="left:20px;top:817px;width:303px;height:24px;background:#fff"><div class="abs" style="left:0;top:0;width:303px;text-align:center;font:bold 9.100px/15px 'Liberation Sans',sans-serif;color:#333">Таблиця 1. Класифікація больових синдромів</div><div class="abs" style="left:1px;top:19px;width:134px;height:6px;background:#2b4fa6;overflow:hidden"><div class="abs" style="left:12px;top:-1px;font:bold 10px/12px 'Liberation Sans',sans-serif;color:#fff;white-space:nowrap">Класифікація болю</div></div><div class="abs" style="left:137px;top:19px;width:165px;height:6px;background:#2b4fa6;overflow:hidden"><div class="abs" style="left:55px;top:-1px;font:bold 10px/12px 'Liberation Sans',sans-serif;color:#fff;white-space:nowrap">Різновиди</div></div></div>
<div class="abs" style="left:338px;top:817px;width:305px;height:24px;background:#fff"><div class="abs" style="left:0;top:1px;width:305px;text-align:center;font:bold 5.200px/8px 'Liberation Sans',sans-serif;color:#223">Таблиця 1. Безпечність протизапальних препаратів для вагітних</div><div class="abs" style="left:0;top:13px;width:305px;height:11px;background:#f3a9c2"></div><div class="abs" style="left:70px;top:13px;width:1px;height:11px;background:#f8c6d6"></div><div class="abs" style="left:127px;top:13px;width:1px;height:11px;background:#f8c6d6"></div><div class="abs" style="left:158px;top:13px;width:1px;height:11px;background:#f8c6d6"></div><div class="abs" style="left:241px;top:13px;width:1px;height:11px;background:#f8c6d6"></div><div class="abs" style="left:0px;top:18px;width:70px;text-align:center;font:4.600px/5px 'Liberation Sans',sans-serif;color:#fbe3ea;white-space:nowrap">Група</div><div class="abs" style="left:70px;top:18px;width:57px;text-align:center;font:4.600px/5px 'Liberation Sans',sans-serif;color:#fbe3ea;white-space:nowrap">Препарат</div><div class="abs" style="left:127px;top:14px;width:31px;text-align:center;font:4.600px/5px 'Liberation Sans',sans-serif;color:#fbe3ea;white-space:nowrap">Категорія</div><div class="abs" style="left:127px;top:19px;width:31px;text-align:center;font:4.600px/5px 'Liberation Sans',sans-serif;color:#fbe3ea;white-space:nowrap">FDA</div><div class="abs" style="left:158px;top:14px;width:83px;text-align:center;font:4.600px/5px 'Liberation Sans',sans-serif;color:#fbe3ea;white-space:nowrap">Негативний вплив на</div><div class="abs" style="left:158px;top:19px;width:83px;text-align:center;font:4.600px/5px 'Liberation Sans',sans-serif;color:#fbe3ea;white-space:nowrap">плід і вагітність</div><div class="abs" style="left:241px;top:17px;width:64px;text-align:center;font:4.600px/5px 'Liberation Sans',sans-serif;color:#fbe3ea;white-space:nowrap">Сумарний ризик</div></div>
<div class="abs" style="left:658px;top:828px;width:415px;height:12px;background:#050505;border-top:1px solid #3a1010"><div class="abs" style="left:6px;top:2px;font:5px/6px 'Liberation Sans',sans-serif;color:#e8e8e8;white-space:nowrap">Препарати, вжиті попереджувати напади мігрені</div><div class="abs" style="left:0;top:10px;width:415px;height:1px;background:#2a6a8a"></div></div>
<!--/TOP-->
    <div id="panel">
<svg class="abs" style="left:279px;top:-12px" width="24" height="12" viewBox="0 0 24 12"><path d="M0 12L12 0l12 12z" fill="#1a1a1a"/></svg>
<div class="bigimg" id="big" style="left:201px;top:25px;box-shadow:0 2px 12px rgba(0,0,0,.6)">
<!--TABLE-->
<div class="cap">Таблиця 1. Класифікація НПЗП за активністю<br>та хімічною структурою [7] (Л.С. Страчунський,<br>С.Н. Козлов)</div>
<div class="th" style="top:40.5px;height:21.2px">НПЗП з вираженою протизапальною активністю</div>
<div class="th" style="top:60.7px;height:15.9px">Кислоти</div>
<div class="tr" style="top:75.6px;height:53.4px"><div class="c1"><div>Саліцилати</div></div><div class="c2"><div><span class=j>Ацетилсаліцилова кислота</span><br>(аспірин)<br>Дифлунізал<br>Лізинмоноацетилсаліцилат</div></div></div>
<div class="tr" style="top:128.0px;height:16.4px"><div class="c1"><div>Піразолідини</div></div><div class="c2"><div>Фенілбутазон</div></div></div>
<div class="tr" style="top:143.4px;height:41.2px"><div class="c1"><div><span class=j>Похідні індолоцтової</span><br>кислоти</div></div><div class="c2"><div>Індометацин<br>Суліндак<br>Етодолак</div></div></div>
<div class="tr" style="top:183.6px;height:31.0px"><div class="c1"><div>Похідні фенілоцтової<br>кислоти</div></div><div class="c2"><div>Диклофенак</div></div></div>
<div class="tr" style="top:213.6px;height:53.4px"><div class="c1"><div>Оксиками</div></div><div class="c2"><div>Піроксикам<br>Теноксикам<br>Лорноксикам<br>Мелоксикам</div></div></div>
<div class="tr" style="top:266.0px;height:67.5px"><div class="c1"><div>Похідні пропіонової<br>кислоти</div></div><div class="c2"><div>Ібупрофен<br>Напроксен<br>Флурбіпрофен<br>Кетопрофен<br>Тіапрофенова кислота</div></div></div>
<div class="th" style="top:332.5px;height:16.3px">Некислотні похідні</div>
<div class="tr" style="top:347.8px;height:17.8px"><div class="c1"><div>Алканони</div></div><div class="c2"><div>Набуметон</div></div></div>
<div class="tr" style="top:364.6px;height:42.4px"><div class="c1"><div>Похідні сульфонаміду</div></div><div class="c2"><div>Німесулід<br>Целекоксиб<br>Рофекоксиб</div></div></div>
<div class="th" style="top:406.0px;height:16.0px">НПЗП зі слабою протизапальною активністю</div>
<div class="tr" style="top:421.0px;height:30.7px"><div class="c1"><div>Похідні антранілової<br>кислоти</div></div><div class="c2"><div>Мефенамінова кислота<br>Етофеномат</div></div></div>
<div class="tr" style="top:450.7px;height:42.1px"><div class="c1"><div>Піразолони</div></div><div class="c2"><div>Метамізол<br>Амінофеназон<br>Пропіфеназон</div></div></div>
<div class="tr" style="top:491.8px;height:30.8px"><div class="c1"><div>Похідні парааміно-<br>фенолу</div></div><div class="c2"><div>Фенацетин<br>Парацетамол</div></div></div>
<div class="tr" style="top:521.6px;height:28.4px"><div class="c1"><div>Похідні гетероарил-<br>оцтової кислоти</div></div><div class="c2"><div>Кеторолак</div></div></div>
<!--/TABLE-->
</div>
<div class="abs" style="left:682.500px;top:25px;width:1px;height:550px;background:#131313"></div>
<svg class="abs" style="left:1210px;top:27px" width="28" height="28" viewBox="0 0 28 28"><path d="M1.500 1.500l25 25M26.500 1.500l-25 25" stroke="#6f6f6f" stroke-width="2" fill="none"/></svg>
<div id="ptitle">Раціональний вибір жарознижуючо…</div>
<div id="psub"><span style="left:0">www.mif-ua.com</span><span style="left:125px">-</span><span style="left:138px">436 × 770</span><span style="left:216px">-</span><span style="left:229px">Поиск по картинке</span></div>
<div id="pdesc">Неопіоїдні анальгетики (анальгетики-антипіретики) або<br>нестероїдні протизапальні препарати (НПЗП)<br>характеризуються унікальним поєднанням жарознижуючого, ...</div>
<div class="pbtn" style="left:709px;width:172px">Показать на странице</div>
<div class="pbtn" style="left:894px;width:210px">Открыть в полном размере</div>
<div id="phr"></div>
<div id="psim">Похожие картинки</div>
<!--THUMBS-->
<div class="abs" style="left:710px;top:318px;width:106px;height:106px;background:#b9b9b9"><div class="abs" style="left:2px;top:2px;width:102px;height:102px;background:#1c1c1c"></div><div class="sth mini" style="left:3px;top:3px"><div class="bigimg" style="left:0;top:0;transform:scale(.3205);transform-origin:0 0"><div class="cap">Таблиця 1. Класифікація НПЗП за активністю<br>та хімічною структурою [7] (Л.С. Страчунський,<br>С.Н. Козлов)</div>
<div class="th" style="top:40.5px;height:21.2px">НПЗП з вираженою протизапальною активністю</div>
<div class="th" style="top:60.7px;height:15.9px">Кислоти</div>
<div class="tr" style="top:75.6px;height:53.4px"><div class="c1"><div>Саліцилати</div></div><div class="c2"><div><span class=j>Ацетилсаліцилова кислота</span><br>(аспірин)<br>Дифлунізал<br>Лізинмоноацетилсаліцилат</div></div></div>
<div class="tr" style="top:128.0px;height:16.4px"><div class="c1"><div>Піразолідини</div></div><div class="c2"><div>Фенілбутазон</div></div></div>
<div class="tr" style="top:143.4px;height:41.2px"><div class="c1"><div><span class=j>Похідні індолоцтової</span><br>кислоти</div></div><div class="c2"><div>Індометацин<br>Суліндак<br>Етодолак</div></div></div>
<div class="tr" style="top:183.6px;height:31.0px"><div class="c1"><div>Похідні фенілоцтової<br>кислоти</div></div><div class="c2"><div>Диклофенак</div></div></div>
<div class="tr" style="top:213.6px;height:53.4px"><div class="c1"><div>Оксиками</div></div><div class="c2"><div>Піроксикам<br>Теноксикам<br>Лорноксикам<br>Мелоксикам</div></div></div>
<div class="tr" style="top:266.0px;height:67.5px"><div class="c1"><div>Похідні пропіонової<br>кислоти</div></div><div class="c2"><div>Ібупрофен<br>Напроксен<br>Флурбіпрофен<br>Кетопрофен<br>Тіапрофенова кислота</div></div></div>
<div class="th" style="top:332.5px;height:16.3px">Некислотні похідні</div>
<div class="tr" style="top:347.8px;height:17.8px"><div class="c1"><div>Алканони</div></div><div class="c2"><div>Набуметон</div></div></div>
<div class="tr" style="top:364.6px;height:42.4px"><div class="c1"><div>Похідні сульфонаміду</div></div><div class="c2"><div>Німесулід<br>Целекоксиб<br>Рофекоксиб</div></div></div>
<div class="th" style="top:406.0px;height:16.0px">НПЗП зі слабою протизапальною активністю</div>
<div class="tr" style="top:421.0px;height:30.7px"><div class="c1"><div>Похідні антранілової<br>кислоти</div></div><div class="c2"><div>Мефенамінова кислота<br>Етофеномат</div></div></div>
<div class="tr" style="top:450.7px;height:42.1px"><div class="c1"><div>Піразолони</div></div><div class="c2"><div>Метамізол<br>Амінофеназон<br>Пропіфеназон</div></div></div>
<div class="tr" style="top:491.8px;height:30.8px"><div class="c1"><div>Похідні парааміно-<br>фенолу</div></div><div class="c2"><div>Фенацетин<br>Парацетамол</div></div></div>
<div class="tr" style="top:521.6px;height:28.4px"><div class="c1"><div>Похідні гетероарил-<br>оцтової кислоти</div></div><div class="c2"><div>Кеторолак</div></div></div>
</div></div></div>
<div class="sth" style="left:827px;top:321px"><svg width="100" height="100" viewBox="0 0 100 100" font-family="Liberation Sans,sans-serif"><rect width="100" height="100" fill="#fff"/><rect x="0" y="3" width="100" height="4" fill="#d2d2d2"/><path d="M0 3.5H100" stroke="#cfcfcf" stroke-width=".6"/><path d="M0 7.5H100" stroke="#cfcfcf" stroke-width=".6"/><path d="M0 10.5H100" stroke="#cfcfcf" stroke-width=".6"/><path d="M0 16.5H100" stroke="#cfcfcf" stroke-width=".6"/><path d="M0 20.5H100" stroke="#cfcfcf" stroke-width=".6"/><path d="M0 26.5H100" stroke="#cfcfcf" stroke-width=".6"/><path d="M0 30.5H100" stroke="#cfcfcf" stroke-width=".6"/><path d="M0 34.5H100" stroke="#cfcfcf" stroke-width=".6"/><path d="M0 38.5H100" stroke="#cfcfcf" stroke-width=".6"/><path d="M0 42.5H100" stroke="#cfcfcf" stroke-width=".6"/><path d="M0 46.5H100" stroke="#cfcfcf" stroke-width=".6"/><path d="M0 52.5H100" stroke="#cfcfcf" stroke-width=".6"/><path d="M0 58.5H100" stroke="#cfcfcf" stroke-width=".6"/><path d="M0 64.5H100" stroke="#cfcfcf" stroke-width=".6"/><path d="M0 70.5H100" stroke="#cfcfcf" stroke-width=".6"/><path d="M0 76.5H100" stroke="#cfcfcf" stroke-width=".6"/><path d="M0 82.5H100" stroke="#cfcfcf" stroke-width=".6"/><path d="M0 88.5H100" stroke="#cfcfcf" stroke-width=".6"/><path d="M0 94.5H100" stroke="#cfcfcf" stroke-width=".6"/><path d="M33.500 3V100M67.500 3V100" stroke="#c4c4c4" stroke-width=".7"/><text x="1" y="6.0" font-size="2.7" fill="#5a5a5a" font-weight="normal" font-style="normal" text-anchor="start">Діючі речовини</text><text x="1" y="9.9" font-size="2.7" fill="#5a5a5a" font-weight="normal" font-style="normal" text-anchor="start"></text><text x="1" y="13.8" font-size="2.7" fill="#5a5a5a" font-weight="normal" font-style="normal" text-anchor="start"></text><text x="1" y="17.7" font-size="2.7" fill="#5a5a5a" font-weight="normal" font-style="normal" text-anchor="start">препарати першого ряду для</text><text x="1" y="21.6" font-size="2.7" fill="#5a5a5a" font-weight="normal" font-style="normal" text-anchor="start">лікування болю помірного</text><text x="1" y="25.5" font-size="2.7" fill="#5a5a5a" font-weight="normal" font-style="normal" text-anchor="start"></text><text x="1" y="29.4" font-size="2.7" fill="#5a5a5a" font-weight="normal" font-style="normal" text-anchor="start">кислоти</text><text x="1" y="33.3" font-size="2.7" fill="#5a5a5a" font-weight="normal" font-style="normal" text-anchor="start"></text><text x="1" y="37.2" font-size="2.7" fill="#5a5a5a" font-weight="normal" font-style="normal" text-anchor="start"></text><text x="1" y="41.1" font-size="2.7" fill="#5a5a5a" font-weight="normal" font-style="normal" text-anchor="start"></text><text x="1" y="45.0" font-size="2.7" fill="#5a5a5a" font-weight="normal" font-style="normal" text-anchor="start"></text><text x="1" y="48.9" font-size="2.7" fill="#5a5a5a" font-weight="normal" font-style="normal" text-anchor="start"></text><text x="1" y="52.8" font-size="2.7" fill="#5a5a5a" font-weight="normal" font-style="normal" text-anchor="start">нестероїдні протизапальні</text><text x="1" y="56.7" font-size="2.7" fill="#5a5a5a" font-weight="normal" font-style="normal" text-anchor="start">засоби, що пригнічують ЦОГ,</text><text x="1" y="60.6" font-size="2.7" fill="#5a5a5a" font-weight="normal" font-style="normal" text-anchor="start">неселективні</text><text x="1" y="64.5" font-size="2.7" fill="#5a5a5a" font-weight="normal" font-style="normal" text-anchor="start"></text><text x="1" y="68.4" font-size="2.7" fill="#5a5a5a" font-weight="normal" font-style="normal" text-anchor="start">похідні оцтової кислоти,</text><text x="1" y="72.3" font-size="2.7" fill="#5a5a5a" font-weight="normal" font-style="normal" text-anchor="start">оксиками, коксиби</text><text x="1" y="76.2" font-size="2.7" fill="#5a5a5a" font-weight="normal" font-style="normal" text-anchor="start"></text><text x="1" y="80.1" font-size="2.7" fill="#5a5a5a" font-weight="normal" font-style="normal" text-anchor="start"></text><text x="1" y="84.0" font-size="2.7" fill="#5a5a5a" font-weight="normal" font-style="normal" text-anchor="start">опіоїдні та неопіоїдні</text><text x="1" y="87.9" font-size="2.7" fill="#5a5a5a" font-weight="normal" font-style="normal" text-anchor="start">анальгетики</text><text x="1" y="91.8" font-size="2.7" fill="#5a5a5a" font-weight="normal" font-style="normal" text-anchor="start"></text><text x="1" y="95.7" font-size="2.7" fill="#5a5a5a" font-weight="normal" font-style="normal" text-anchor="start">саліцилати</text><text x="35" y="6.0" font-size="2.7" fill="#505050" font-weight="normal" font-style="normal" text-anchor="start">Ефективність</text><text x="35" y="9.7" font-size="2.7" fill="#505050" font-weight="normal" font-style="normal" text-anchor="start"></text><text x="35" y="13.3" font-size="2.7" fill="#505050" font-weight="normal" font-style="normal" text-anchor="start">Класифікація</text><text x="35" y="16.9" font-size="2.7" fill="#505050" font-weight="normal" font-style="normal" text-anchor="start">доза та кратність прийому</text><text x="35" y="20.6" font-size="2.7" fill="#505050" font-weight="normal" font-style="normal" text-anchor="start">таблетки, розчин, свічки</text><text x="35" y="24.2" font-size="2.7" fill="#505050" font-weight="normal" font-style="normal" text-anchor="start">Фармакологія</text><text x="35" y="27.9" font-size="2.7" fill="#505050" font-weight="normal" font-style="normal" text-anchor="start">перорально, місцево</text><text x="35" y="31.6" font-size="2.7" fill="#505050" font-weight="normal" font-style="normal" text-anchor="start">Дози</text><text x="35" y="35.2" font-size="2.7" fill="#505050" font-weight="normal" font-style="normal" text-anchor="start">внутрішньом'язово</text><text x="35" y="38.9" font-size="2.7" fill="#505050" font-weight="normal" font-style="normal" text-anchor="start">Діти</text><text x="35" y="42.5" font-size="2.7" fill="#505050" font-weight="normal" font-style="normal" text-anchor="start">таблетки по 0,5 г</text><text x="35" y="46.1" font-size="2.7" fill="#505050" font-weight="normal" font-style="normal" text-anchor="start">Дорослі</text><text x="35" y="49.8" font-size="2.7" fill="#505050" font-weight="normal" font-style="normal" text-anchor="start"></text><text x="35" y="53.4" font-size="2.7" fill="#505050" font-weight="normal" font-style="normal" text-anchor="start">Побічні ефекти</text><text x="35" y="57.1" font-size="2.7" fill="#505050" font-weight="normal" font-style="normal" text-anchor="start"></text><text x="35" y="60.8" font-size="2.7" fill="#505050" font-weight="normal" font-style="normal" text-anchor="start">Вагітні</text><text x="35" y="64.4" font-size="2.7" fill="#505050" font-weight="normal" font-style="normal" text-anchor="start">парацетамол</text><text x="35" y="68.0" font-size="2.7" fill="#505050" font-weight="normal" font-style="normal" text-anchor="start">ібупрофен, напроксен</text><text x="35" y="71.7" font-size="2.7" fill="#505050" font-weight="normal" font-style="normal" text-anchor="start">диклофенак натрію</text><text x="35" y="75.3" font-size="2.7" fill="#505050" font-weight="normal" font-style="normal" text-anchor="start"></text><text x="35" y="79.0" font-size="2.7" fill="#505050" font-weight="normal" font-style="normal" text-anchor="start">німесулід</text><text x="35" y="82.6" font-size="2.7" fill="#505050" font-weight="normal" font-style="normal" text-anchor="start">Літні</text><text x="35" y="86.3" font-size="2.7" fill="#505050" font-weight="normal" font-style="normal" text-anchor="start">мелоксикам</text><text x="35" y="90.0" font-size="2.7" fill="#505050" font-weight="normal" font-style="normal" text-anchor="start">целекоксиб</text><text x="35" y="93.6" font-size="2.7" fill="#505050" font-weight="normal" font-style="normal" text-anchor="start">Примітки</text><text x="35" y="97.2" font-size="2.7" fill="#505050" font-weight="normal" font-style="normal" text-anchor="start">кеторолак, метамізол</text><text x="69" y="6.0" font-size="2.7" fill="#5a5a5a" font-weight="normal" font-style="normal" text-anchor="start">Примітки</text><text x="69" y="9.7" font-size="2.7" fill="#5a5a5a" font-weight="normal" font-style="normal" text-anchor="start"></text><text x="69" y="13.3" font-size="2.7" fill="#5a5a5a" font-weight="normal" font-style="normal" text-anchor="start"></text><text x="69" y="16.9" font-size="2.7" fill="#5a5a5a" font-weight="normal" font-style="normal" text-anchor="start">обережно при</text><text x="69" y="20.6" font-size="2.7" fill="#5a5a5a" font-weight="normal" font-style="normal" text-anchor="start">виразковій хворобі</text><text x="69" y="24.2" font-size="2.7" fill="#5a5a5a" font-weight="normal" font-style="normal" text-anchor="start"></text><text x="69" y="27.9" font-size="2.7" fill="#5a5a5a" font-weight="normal" font-style="normal" text-anchor="start">протипоказано</text><text x="69" y="31.6" font-size="2.7" fill="#5a5a5a" font-weight="normal" font-style="normal" text-anchor="start"></text><text x="69" y="35.2" font-size="2.7" fill="#5a5a5a" font-weight="normal" font-style="normal" text-anchor="start"></text><text x="69" y="38.9" font-size="2.7" fill="#5a5a5a" font-weight="normal" font-style="normal" text-anchor="start">контроль АТ</text><text x="69" y="42.5" font-size="2.7" fill="#5a5a5a" font-weight="normal" font-style="normal" text-anchor="start"></text><text x="69" y="46.1" font-size="2.7" fill="#5a5a5a" font-weight="normal" font-style="normal" text-anchor="start"></text><text x="69" y="49.8" font-size="2.7" fill="#5a5a5a" font-weight="normal" font-style="normal" text-anchor="start">ризик кровотеч,</text><text x="69" y="53.4" font-size="2.7" fill="#5a5a5a" font-weight="normal" font-style="normal" text-anchor="start">порушення функції нирок,</text><text x="69" y="57.1" font-size="2.7" fill="#5a5a5a" font-weight="normal" font-style="normal" text-anchor="start">гепатотоксичність</text><text x="69" y="60.8" font-size="2.7" fill="#5a5a5a" font-weight="normal" font-style="normal" text-anchor="start"></text><text x="69" y="64.4" font-size="2.7" fill="#5a5a5a" font-weight="normal" font-style="normal" text-anchor="start">з обережністю</text><text x="69" y="68.0" font-size="2.7" fill="#5a5a5a" font-weight="normal" font-style="normal" text-anchor="start">у хворих з астмою,</text><text x="69" y="71.7" font-size="2.7" fill="#5a5a5a" font-weight="normal" font-style="normal" text-anchor="start">серцевою недостатністю</text><text x="69" y="75.3" font-size="2.7" fill="#5a5a5a" font-weight="normal" font-style="normal" text-anchor="start">та у літніх</text><text x="69" y="79.0" font-size="2.7" fill="#5a5a5a" font-weight="normal" font-style="normal" text-anchor="start"></text><text x="69" y="82.6" font-size="2.7" fill="#5a5a5a" font-weight="normal" font-style="normal" text-anchor="start">короткими курсами</text><text x="69" y="86.3" font-size="2.7" fill="#5a5a5a" font-weight="normal" font-style="normal" text-anchor="start">у мінімальних дозах</text><text x="69" y="90.0" font-size="2.7" fill="#5a5a5a" font-weight="normal" font-style="normal" text-anchor="start"></text><text x="69" y="93.6" font-size="2.7" fill="#5a5a5a" font-weight="normal" font-style="normal" text-anchor="start">не поєднувати</text><text x="69" y="97.2" font-size="2.7" fill="#5a5a5a" font-weight="normal" font-style="normal" text-anchor="start">з антикоагулянтами</text></svg></div>
<div class="sth" style="left:941px;top:321px"><svg width="100" height="100" viewBox="0 0 100 100" font-family="Liberation Sans,sans-serif"><rect width="100" height="100" fill="#fff"/><text x="50" y="5" font-size="4.200" font-style="italic" fill="#333" text-anchor="middle">Таблиця 9. Діуретики</text><rect x="0" y="7" width="100" height="11" fill="#dad4cf"/><path d="M8.500 7v11M54.500 7v11" stroke="#fff" stroke-width="1"/><text x="31" y="11.5" font-size="4" fill="#444" font-weight="bold" font-style="normal" text-anchor="middle">Частота приймання</text><text x="31" y="16.5" font-size="4" fill="#444" font-weight="bold" font-style="normal" text-anchor="middle">на добу</text><text x="3" y="11.5" font-size="4" fill="#444" font-weight="bold" font-style="normal" text-anchor="middle">ва</text><text x="3" y="16.5" font-size="4" fill="#444" font-weight="bold" font-style="normal" text-anchor="middle">д)</text><text x="50" y="22.5" font-size="4.200" font-style="italic" fill="#333" text-anchor="middle">Тіазидні діуретики</text><text x="50" y="47.5" font-size="4.200" font-style="italic" fill="#333" text-anchor="middle">Тіазидоподібні діуретики</text><text x="50" y="61.5" font-size="4.200" font-style="italic" fill="#333" text-anchor="middle">Петльові діуретики</text><text x="50" y="81" font-size="4.200" font-style="italic" fill="#333" text-anchor="middle">Калійзберігаючі діуретики</text><path d="M0 25.5H100M0 42.5H100M8.500 25V42M54.500 25V42" stroke="#bdb7b2" stroke-width=".8" fill="none"/><path d="M0 50.5H100M0 56.5H100M8.500 50V56M54.500 50V56" stroke="#bdb7b2" stroke-width=".8" fill="none"/><path d="M0 64.5H100M0 75.5H100M8.500 64V75M54.500 64V75" stroke="#bdb7b2" stroke-width=".8" fill="none"/><path d="M0 84.5H100M0 100.5H100M8.500 84V100M54.500 84V100" stroke="#bdb7b2" stroke-width=".8" fill="none"/><text x="31" y="30.0" font-size="4" fill="#555" font-weight="normal" font-style="normal" text-anchor="middle">1</text><text x="56" y="30.0" font-size="3.9" fill="#444" font-weight="normal" font-style="normal" text-anchor="start">Більш ефективні для</text><text x="56" y="35.0" font-size="3.9" fill="#444" font-weight="normal" font-style="normal" text-anchor="start">ніж діуретики, за ви</text><text x="56" y="40.0" font-size="3.9" fill="#444" font-weight="normal" font-style="normal" text-anchor="start">&gt; 177 мкмоль/л</text><text x="31" y="54.5" font-size="4" fill="#555" font-weight="normal" font-style="normal" text-anchor="middle">1</text><text x="31" y="68.5" font-size="4" fill="#555" font-weight="normal" font-style="normal" text-anchor="middle">1–2</text><text x="31" y="73.5" font-size="4" fill="#555" font-weight="normal" font-style="normal" text-anchor="middle">1–2</text><text x="56" y="68.5" font-size="3.9" fill="#444" font-weight="normal" font-style="normal" text-anchor="start">При лікуванні набряк</text><text x="56" y="73.5" font-size="3.9" fill="#444" font-weight="normal" font-style="normal" text-anchor="start">недостатністю нирок</text><text x="31" y="88.0" font-size="4" fill="#555" font-weight="normal" font-style="normal" text-anchor="middle">1–2</text><text x="31" y="93.0" font-size="4" fill="#555" font-weight="normal" font-style="normal" text-anchor="middle">2–3</text><text x="31" y="98.0" font-size="4" fill="#555" font-weight="normal" font-style="normal" text-anchor="middle">1–2</text><text x="56" y="90.5" font-size="3.9" fill="#444" font-weight="normal" font-style="normal" text-anchor="start">Не застосовувати, як</text><text x="56" y="95.5" font-size="3.9" fill="#444" font-weight="normal" font-style="normal" text-anchor="start">&gt; 220 мкмоль/л</text></svg></div>
<div class="sth" style="left:1054px;top:321px"><svg width="100" height="100" viewBox="0 0 100 100" font-family="Liberation Sans,sans-serif"><rect width="100" height="100" fill="#fff"/><text x="50" y="4.500" font-size="3" fill="#444" text-anchor="middle">Фактори ризику (тригери)</text><text x="19" y="9.0" font-size="3" fill="#555" font-weight="normal" font-style="normal" text-anchor="middle">Генетичні</text><text x="40" y="9" font-size="3" fill="#555" text-anchor="middle">Імунні</text><text x="66" y="9" font-size="3" fill="#555" text-anchor="middle">Ендокринні</text><text x="93" y="9" font-size="3" fill="#555" text-anchor="middle">Екологічні</text><ellipse cx="48" cy="23.500" rx="20" ry="5" fill="#fff" stroke="#444" stroke-width=".7"/><text x="48" y="22.500" font-size="3" fill="#333" text-anchor="middle">Імунна</text><text x="48" y="26" font-size="3" fill="#333" text-anchor="middle">відповідь</text><path d="M2 11L26 22M14 11L30 19M44 11L47 17M62 11L58 17M92 11L70 21M36 28L32 32M44 29L43 33M52 29L53 33M62 28L66 32M50 69V72M30 81L4 84M40 81L34 86M58 81L64 86M70 81L96 85" stroke="#666" stroke-width=".6" fill="none"/><text x="48" y="37" font-size="3" fill="#333" text-anchor="middle">ФНП-α, ІЛ-1, ІЛ-6, ІФН, ПГЕ2</text><text x="48" y="44" font-size="3.200" fill="#333" text-anchor="middle">Медіатори запалення</text><rect x="1" y="50.500" width="103" height="9" fill="#fff" stroke="#888" stroke-width=".6"/><text x="52" y="54" font-size="2.700" fill="#666" text-anchor="middle">Розвиток запального процесу в синовіальній оболонці</text><text x="52" y="57.800" font-size="2.700" fill="#666" text-anchor="middle">проліферація клітин, формування паннусу, деструкція</text><rect x="35.500" y="64.500" width="30" height="5.500" fill="#fff" stroke="#444" stroke-width=".7"/><text x="50.500" y="68.800" font-size="3.300" fill="#333" text-anchor="middle">Фосфоліпаза А</text><text x="14" y="78.0" font-size="2.8" fill="#666" font-weight="normal" font-style="normal" text-anchor="middle">Суглоби</text><text x="42" y="78" font-size="2.800" fill="#666" text-anchor="middle">Арахідонова</text><text x="42" y="81.500" font-size="2.800" fill="#666" text-anchor="middle">кислота</text><text x="62" y="78" font-size="2.800" fill="#666" text-anchor="middle">Лізофосфо-</text><text x="62" y="81.500" font-size="2.800" fill="#666" text-anchor="middle">ліпід</text><text x="82" y="79" font-size="2.800" fill="#777" text-anchor="middle">Вільні</text><text x="82" y="83" font-size="2.800" fill="#777" text-anchor="middle">радикали</text><text x="82" y="87" font-size="2.800" fill="#777" text-anchor="middle">кисню</text><text x="98" y="79" font-size="2.800" fill="#777" text-anchor="middle">ФАТ</text><text x="14" y="88.500" font-size="2.800" fill="#555" text-anchor="middle">ПГ</text><text x="42" y="88.500" font-size="2.800" fill="#555" text-anchor="middle">ПГ, ТХ, ЛТ</text><path d="M0 91.500H100" stroke="#ccc" stroke-width=".6"/><text x="1" y="96" font-size="3.200" font-weight="bold" fill="#333">механізм медіаторів запалення</text></svg></div>
<div class="sth" style="left:713px;top:433px"><svg width="100" height="100" viewBox="0 0 100 100" font-family="Liberation Sans,sans-serif"><rect width="100" height="100" fill="#fff"/><rect x="26" y="1" width="48" height="6.500" fill="#e6eef6"/><text x="50" y="4" font-size="2.500" font-weight="bold" fill="#333" text-anchor="middle">Хворий на ОА з суглобовим болем</text><text x="50" y="6.800" font-size="2.500" font-weight="bold" fill="#333" text-anchor="middle">Фактори ризику з боку ШКТ</text><path d="M26 4H12V10M74 4H85V10M12 33V40H38M88 33V40H62M50 45V50M12 60V61H38M88 60V61H62M50 66V70M50 82V84" stroke="#c98a8a" stroke-width=".5" fill="none"/><rect x="1" y="10" width="31" height="22" fill="#e3efe9" stroke="#cfdcd6" stroke-width=".4"/><text x="16.5" y="13.4" font-size="2.4" font-weight="bold" fill="#333" text-anchor="middle">Немає ШК ризику</text><text x="16.5" y="16.2" font-size="2.4" font-weight="bold" fill="#333" text-anchor="middle">застосування неселективних</text><text x="16.5" y="19.0" font-size="2.4" font-weight="bold" fill="#333" text-anchor="middle">НПЗП; низький</text><text x="16.5" y="21.8" font-size="2.4" font-weight="bold" fill="#333" text-anchor="middle">або</text><text x="16.5" y="24.6" font-size="2.4" font-weight="bold" fill="#333" text-anchor="middle">помірний — коксиби</text><text x="16.5" y="27.4" font-size="2.4" font-weight="bold" fill="#333" text-anchor="middle">або НПЗП + ІПП; високий</text><text x="16.5" y="30.2" font-size="2.4" font-weight="bold" fill="#333" text-anchor="middle">— уникати</text><rect x="62" y="10" width="38" height="22" fill="#e3efe9" stroke="#cfdcd6" stroke-width=".4"/><text x="81.0" y="12.0" font-size="2.4" font-weight="bold" fill="#333" text-anchor="middle">Ризик ШК помірний чи високий</text><text x="81.0" y="14.8" font-size="2.4" font-weight="bold" fill="#333" text-anchor="middle">без ІПП: коксиби</text><text x="81.0" y="17.6" font-size="2.4" font-weight="bold" fill="#333" text-anchor="middle">селективні інгібітори ЦОГ-2</text><text x="81.0" y="20.4" font-size="2.4" font-weight="bold" fill="#333" text-anchor="middle">або</text><text x="81.0" y="23.2" font-size="2.4" font-weight="bold" fill="#333" text-anchor="middle">Ризик ССЗ: низькі дози АСК</text><text x="81.0" y="26.0" font-size="2.4" font-weight="bold" fill="#333" text-anchor="middle">напроксен + ІПП</text><text x="81.0" y="28.8" font-size="2.4" font-weight="bold" fill="#333" text-anchor="middle">уникати високих доз диклофенаку</text><text x="81.0" y="31.6" font-size="2.4" font-weight="bold" fill="#333" text-anchor="middle">ібупрофену</text><rect x="37" y="35" width="27" height="9" fill="#e3efe9" stroke="#cfdcd6" stroke-width=".4"/><text x="50.5" y="37.5" font-size="2.4" font-weight="bold" fill="#333" text-anchor="middle">Парацетамол</text><text x="50.5" y="40.3" font-size="2.4" font-weight="bold" fill="#333" text-anchor="middle">до 4 г/добу, місцеві НПЗП</text><text x="50.5" y="43.1" font-size="2.4" font-weight="bold" fill="#333" text-anchor="middle">хондропротектори</text><rect x="1" y="44" width="31" height="13" fill="#e3efe9" stroke="#cfdcd6" stroke-width=".4"/><text x="16.5" y="45.7" font-size="2.4" font-weight="bold" fill="#333" text-anchor="middle">Ризик ШК низький (немає</text><text x="16.5" y="48.5" font-size="2.4" font-weight="bold" fill="#333" text-anchor="middle">факторів ризику)</text><text x="16.5" y="51.3" font-size="2.4" font-weight="bold" fill="#333" text-anchor="middle">НПЗП + ІПП або коксиб</text><text x="16.5" y="54.1" font-size="2.4" font-weight="bold" fill="#333" text-anchor="middle">неселективні НПЗП при потребі</text><text x="16.5" y="56.9" font-size="2.4" font-weight="bold" fill="#333" text-anchor="middle">короткі курси</text><rect x="68" y="44" width="32" height="13" fill="#e3efe9" stroke="#cfdcd6" stroke-width=".4"/><text x="84.0" y="45.7" font-size="2.4" font-weight="bold" fill="#333" text-anchor="middle">Ризик ШК високий (виразка</text><text x="84.0" y="48.5" font-size="2.4" font-weight="bold" fill="#333" text-anchor="middle">в анамнезі)</text><text x="84.0" y="51.3" font-size="2.4" font-weight="bold" fill="#333" text-anchor="middle">коксиб + ІПП</text><text x="84.0" y="54.1" font-size="2.4" font-weight="bold" fill="#333" text-anchor="middle">уникати неселективних НПЗП</text><text x="84.0" y="56.9" font-size="2.4" font-weight="bold" fill="#333" text-anchor="middle">(навіть з ІПП)</text><rect x="37" y="57" width="27" height="9" fill="#e3efe9" stroke="#cfdcd6" stroke-width=".4"/><text x="50.5" y="59.5" font-size="2.4" font-weight="bold" fill="#333" text-anchor="middle">Опіоїди слабкі</text><text x="50.5" y="62.3" font-size="2.4" font-weight="bold" fill="#333" text-anchor="middle">трамадол, або кодеїн</text><text x="50.5" y="65.1" font-size="2.4" font-weight="bold" fill="#333" text-anchor="middle">дулоксетин</text><rect x="30" y="70" width="42" height="11" fill="#e3efe9" stroke="#cfdcd6" stroke-width=".4"/><text x="51.0" y="72.1" font-size="2.4" font-weight="bold" fill="#333" text-anchor="middle">Ризик ШК дуже високий: коксиб + ІПП,</text><text x="51.0" y="74.9" font-size="2.4" font-weight="bold" fill="#333" text-anchor="middle">Ризик ССЗ високий: напроксен,</text><text x="51.0" y="77.7" font-size="2.4" font-weight="bold" fill="#333" text-anchor="middle">Ниркова недост.: ШКФ &lt;30 мл/хв уникати</text><text x="51.0" y="80.5" font-size="2.4" font-weight="bold" fill="#333" text-anchor="middle">НПЗП, обережно</text><rect x="24" y="85" width="52" height="4.5" fill="#e3efe9" stroke="#cfdcd6" stroke-width=".4"/><text x="50.0" y="88.0" font-size="2.4" font-weight="bold" fill="#333" text-anchor="middle">Хірургічне лікування, ендопротезування суглобів</text><text x="50" y="95.500" font-size="2.300" fill="#b06a6a" text-anchor="middle">Рисунок 2. Рекомендації щодо вибору НПЗП з урахуванням ризику</text><text x="50" y="98.300" font-size="2.300" fill="#777" text-anchor="middle">ускладнень з боку ШКТ та серцево-судинної системи</text></svg></div>
<div class="sth" style="left:827px;top:433px"><svg width="100" height="100" viewBox="0 0 100 100" font-family="Liberation Sans,sans-serif"><rect width="100" height="100" fill="#e3f1f1"/><rect width="100" height="7" fill="#b9b9b9"/><text x="49" y="4.800" font-size="3" font-weight="bold" fill="#333" text-anchor="middle">Таблиця 1. Типи НПЗП-гастропатій (R.R. Taft, 1994)</text><rect y="7" width="100" height="6" fill="#d0e9ea"/><path d="M8.500 7V100M51.500 7V100M85.500 7V100" stroke="#d3e6e6" stroke-width=".6"/><text x="30" y="11.5" font-size="2.700" font-weight="bold" fill="#444" text-anchor="middle">Клінічний симптом</text><text x="68" y="11.5" font-size="2.700" font-weight="bold" fill="#444" text-anchor="middle">Характерні прояви</text><text x="100" y="11.5" font-size="2.700" font-weight="bold" fill="#444" text-anchor="end">Кіль</text><text x="30" y="17" font-size="2.700" font-weight="bold" fill="#444" text-anchor="middle">Анемія</text><text x="68" y="17" font-size="2.700" font-weight="bold" fill="#444" text-anchor="middle">Дні – місяці</text><text x="100" y="17" font-size="2.700" font-weight="bold" fill="#444" text-anchor="end">Д</text><text x="30" y="26.5" font-size="2.700" font-weight="bold" fill="#444" text-anchor="middle">Функціональні розлади шлунка</text><text x="100" y="26.5" font-size="2.700" font-weight="bold" fill="#444" text-anchor="end">Халцепьюкові розлади шлу</text><text x="30" y="33.5" font-size="2.700" font-weight="bold" fill="#444" text-anchor="middle">Кислотні відрижки</text><text x="68" y="33.5" font-size="2.700" font-weight="bold" fill="#444" text-anchor="middle">Часто не виникають</text><text x="100" y="33.5" font-size="2.700" font-weight="bold" fill="#444" text-anchor="end">Призначит</text><text x="30" y="43" font-size="2.700" font-weight="bold" fill="#444" text-anchor="middle">Локальний пошук,</text><text x="100" y="43" font-size="2.700" font-weight="bold" fill="#444" text-anchor="end">Зникають під дією анта</text><text x="30" y="46.5" font-size="2.700" font-weight="bold" fill="#444" text-anchor="middle">рН-залежність</text><text x="30" y="53" font-size="2.700" font-weight="bold" fill="#444" text-anchor="middle">Жар</text><text x="68" y="53" font-size="2.700" font-weight="bold" fill="#444" text-anchor="middle">Сильне</text><text x="100" y="53" font-size="2.700" font-weight="bold" fill="#444" text-anchor="end">До</text><text x="30" y="60" font-size="2.700" font-weight="bold" fill="#444" text-anchor="middle">Знижується кількість</text><text x="68" y="60" font-size="2.700" font-weight="bold" fill="#444" text-anchor="middle">Можливий</text><text x="100" y="60" font-size="2.700" font-weight="bold" fill="#444" text-anchor="end">О</text><text x="30" y="63.5" font-size="2.700" font-weight="bold" fill="#444" text-anchor="middle">гранами</text><text x="30" y="70" font-size="2.700" font-weight="bold" fill="#444" text-anchor="middle">Супероксиди</text><text x="68" y="70" font-size="2.700" font-weight="bold" fill="#444" text-anchor="middle">Жовчні кислоти у</text><text x="100" y="70" font-size="2.700" font-weight="bold" fill="#444" text-anchor="end">Не</text><text x="68" y="73.5" font-size="2.700" font-weight="bold" fill="#444" text-anchor="middle">шлунку</text><text x="100" y="73.5" font-size="2.700" font-weight="bold" fill="#444" text-anchor="end">ш</text><text x="30" y="79.5" font-size="2.700" font-weight="bold" fill="#444" text-anchor="middle">Шлунок</text><text x="68" y="79.5" font-size="2.700" font-weight="bold" fill="#444" text-anchor="middle">Шлунок, рідко тонка</text><text x="100" y="79.5" font-size="2.700" font-weight="bold" fill="#444" text-anchor="end">Ер</text><text x="68" y="83" font-size="2.700" font-weight="bold" fill="#444" text-anchor="middle">кровотеча</text><text x="30" y="88.5" font-size="2.700" font-weight="bold" fill="#444" text-anchor="middle">Язвена</text><text x="68" y="88.5" font-size="2.700" font-weight="bold" fill="#444" text-anchor="middle">Супероксид</text><text x="100" y="88.5" font-size="2.700" font-weight="bold" fill="#444" text-anchor="end">Не</text><text x="30" y="95.5" font-size="2.700" font-weight="bold" fill="#444" text-anchor="middle">Язвена</text><text x="68" y="95.5" font-size="2.700" font-weight="bold" fill="#444" text-anchor="middle">Язвена</text><text x="100" y="95.5" font-size="2.700" font-weight="bold" fill="#444" text-anchor="end">Ред</text></svg></div>
<div class="sth" style="left:941px;top:433px"><svg width="100" height="100" viewBox="0 0 100 100" font-family="Liberation Sans,sans-serif"><rect width="100" height="100" fill="#fff"/><text x="1" y="8.500" font-size="4" font-weight="bold" fill="#333">Дії нестероїдних протизапальних препаратів</text><rect x="18" y="12" width="29" height="9" fill="#fff" stroke="#555" stroke-width="1"/><text x="32.5" y="15.9" font-size="2.5" font-weight="bold" fill="#333" text-anchor="middle">Фосфоліпіди</text><text x="32.5" y="18.9" font-size="2.5" font-weight="bold" fill="#333" text-anchor="middle">клітинних мембран</text><text x="34" y="28.500" font-size="2.800" font-weight="bold" fill="#333" text-anchor="middle">Арахідонова кислота</text><text x="82" y="21.500" font-size="2.600" font-weight="bold" fill="#444" text-anchor="middle">Фосфоліпаза А₂ глюкокортикоїди</text><path d="M34 21V25M16 29L0 35M22 31L6 40M50 31L66 36M56 33L96 38M52 26H100M86 22L100 55" stroke="#444" stroke-width=".8" fill="none"/><path d="M50 28H100M44 23H62" stroke="#aaa" stroke-width=".4"/><rect x="16" y="31" width="31" height="11" fill="#fff" stroke="#aaa" stroke-width="1"/><text x="31.5" y="35.9" font-size="2.5" font-weight="bold" fill="#333" text-anchor="middle">НПЗП (інгібітори ЦОГ)</text><text x="31.5" y="38.9" font-size="2.5" font-weight="bold" fill="#333" text-anchor="middle">інгібітори ЦОГ</text><text x="78" y="39" font-size="2.700" font-weight="bold" fill="#333" text-anchor="middle">Циклооксигеназний шлях</text><text x="76" y="42.500" font-size="2.500" fill="#444" text-anchor="middle">(ЦОГ-1)</text><text x="76" y="45.500" font-size="2.500" font-weight="bold" fill="#444" text-anchor="middle">Фізіологічні</text><text x="76" y="48.500" font-size="2.500" font-weight="bold" fill="#444" text-anchor="middle">ендогенні</text><text x="76" y="51.500" font-size="2.500" font-weight="bold" fill="#444" text-anchor="middle">простаноїди</text><path d="M72 53V58" stroke="#333" stroke-width=".8" stroke-dasharray="1.500 1"/><text x="3" y="38.500" font-size="2.500" fill="#444" text-anchor="middle">ЦОГ-2</text><text x="3" y="45.500" font-size="2.500" fill="#444" text-anchor="middle">ЦОГ-1</text><rect x="0" y="58" width="22" height="9" fill="#fff" stroke="#555" stroke-width="1"/><text x="11.0" y="61.9" font-size="2.5" font-weight="bold" fill="#333" text-anchor="middle">Захист слизової</text><text x="11.0" y="64.9" font-size="2.5" font-weight="bold" fill="#333" text-anchor="middle">ШКТ, нирок</text><rect x="58" y="60" width="20" height="12" fill="#fff" stroke="#555" stroke-width="1"/><text x="68.0" y="63.9" font-size="2.5" font-weight="bold" fill="#333" text-anchor="middle">Захист СО</text><text x="68.0" y="66.9" font-size="2.5" font-weight="bold" fill="#333" text-anchor="middle">порушення</text><text x="68.0" y="69.9" font-size="2.5" font-weight="bold" fill="#333" text-anchor="middle">рівноваги</text><rect x="94" y="64" width="8" height="7" fill="#fff" stroke="#555" stroke-width="1"/><text x="98.0" y="68.4" font-size="2.5" font-weight="bold" fill="#333" text-anchor="middle"></text><path d="M12 67L16 77M26 66L38 75M78 66L86 72" stroke="#444" stroke-width=".7"/><rect x="-6" y="77" width="8" height="10" fill="#fff" stroke="#555" stroke-width="1"/><text x="-2.0" y="82.9" font-size="2.5" font-weight="bold" fill="#333" text-anchor="middle"></text><rect x="6" y="78" width="23" height="11" fill="#fff" stroke="#555" stroke-width="1"/><text x="17.5" y="81.4" font-size="2.5" font-weight="bold" fill="#333" text-anchor="middle">Вплив на</text><text x="17.5" y="84.4" font-size="2.5" font-weight="bold" fill="#333" text-anchor="middle">функцію нирок</text><text x="17.5" y="87.4" font-size="2.5" font-weight="bold" fill="#333" text-anchor="middle">судин</text><rect x="37" y="75" width="20" height="12" fill="#fff" stroke="#555" stroke-width="1"/><text x="47.0" y="78.9" font-size="2.5" font-weight="bold" fill="#333" text-anchor="middle">Вплив на</text><text x="47.0" y="81.9" font-size="2.5" font-weight="bold" fill="#333" text-anchor="middle">тромбоцити</text><text x="47.0" y="84.9" font-size="2.5" font-weight="bold" fill="#333" text-anchor="middle">(агрегація)</text><path d="M88 71l2 5 6-2-2 5 6 2-6 3 3 5-6-1-1 6-4-4-5 4-1-6-6 1 3-5-6-3 6-2-2-5 6 2z" fill="#fff" stroke="#444" stroke-width=".7"/><text x="90" y="81" font-size="2.400" fill="#444" text-anchor="middle">Запалення</text><text x="90" y="84" font-size="2.400" fill="#444" text-anchor="middle">біль</text><text x="90" y="87" font-size="2.400" fill="#444" text-anchor="middle">гарячка</text><path d="M1 94.500H9" stroke="#333" stroke-width=".8" stroke-dasharray="1.500 1"/><text x="11" y="95.500" font-size="2.600" font-weight="bold" fill="#333">— інгібуюча дія</text></svg></div>
<div class="sth" style="left:1054px;top:433px;background:#6f7d89"><svg width="100" height="100" viewBox="0 0 100 100" font-family="Liberation Sans,sans-serif"><rect width="100" height="100" fill="#6f7d89"/><rect x="31" width="51" height="100" fill="#7a807d"/><rect width="100" height="5" fill="#050505"/><text x="56" y="9.0" font-size="2.5" fill="#5f6663" font-weight="normal" font-style="normal" text-anchor="middle">Типові дозування</text><text x="56" y="13.9" font-size="2.5" fill="#5f6663" font-weight="normal" font-style="normal" text-anchor="middle"></text><text x="56" y="18.8" font-size="2.5" fill="#5f6663" font-weight="normal" font-style="normal" text-anchor="middle">Ібупрофен 200–400 мг на добу</text><text x="56" y="23.7" font-size="2.5" fill="#5f6663" font-weight="normal" font-style="normal" text-anchor="middle"></text><text x="56" y="28.6" font-size="2.5" fill="#5f6663" font-weight="normal" font-style="normal" text-anchor="middle">Диклофенак 100–150 мг на добу</text><text x="56" y="33.5" font-size="2.5" fill="#5f6663" font-weight="normal" font-style="normal" text-anchor="middle"></text><text x="56" y="38.4" font-size="2.5" fill="#5f6663" font-weight="normal" font-style="normal" text-anchor="middle">Напроксен 500 мг</text><text x="56" y="43.3" font-size="2.5" fill="#5f6663" font-weight="normal" font-style="normal" text-anchor="middle"></text><text x="56" y="48.2" font-size="2.5" fill="#5f6663" font-weight="normal" font-style="normal" text-anchor="middle">Німесулід 200 мг</text><text x="56" y="53.1" font-size="2.5" fill="#5f6663" font-weight="normal" font-style="normal" text-anchor="middle"></text><text x="56" y="58.0" font-size="2.5" fill="#5f6663" font-weight="normal" font-style="normal" text-anchor="middle">Мелоксикам 7,5–15 мг на добу</text><text x="56" y="62.9" font-size="2.5" fill="#5f6663" font-weight="normal" font-style="normal" text-anchor="middle"></text><text x="56" y="67.8" font-size="2.5" fill="#5f6663" font-weight="normal" font-style="normal" text-anchor="middle">Целекоксиб 200 мг на добу</text><text x="56" y="72.7" font-size="2.5" fill="#5f6663" font-weight="normal" font-style="normal" text-anchor="middle"></text><text x="56" y="77.6" font-size="2.5" fill="#5f6663" font-weight="normal" font-style="normal" text-anchor="middle">Кеторолак, 10 мг кожні 4–6 годин</text><text x="56" y="82.5" font-size="2.5" fill="#5f6663" font-weight="normal" font-style="normal" text-anchor="middle">до 40 мг на добу</text><text x="56" y="87.4" font-size="2.5" fill="#5f6663" font-weight="normal" font-style="normal" text-anchor="middle"></text><text x="56" y="92.3" font-size="2.5" fill="#5f6663" font-weight="normal" font-style="normal" text-anchor="middle">Парацетамол до 4 г на добу</text><text x="8" y="38.0" font-size="2.4" fill="#5d6a75" font-weight="normal" font-style="normal" text-anchor="start">Препарат</text><text x="8" y="48.0" font-size="2.4" fill="#5d6a75" font-weight="normal" font-style="normal" text-anchor="start"></text><text x="8" y="58.0" font-size="2.4" fill="#5d6a75" font-weight="normal" font-style="normal" text-anchor="start"></text><text x="8" y="68.0" font-size="2.4" fill="#5d6a75" font-weight="normal" font-style="normal" text-anchor="start">Група</text><text x="8" y="78.0" font-size="2.4" fill="#5d6a75" font-weight="normal" font-style="normal" text-anchor="start"></text><text x="8" y="88.0" font-size="2.4" fill="#5d6a75" font-weight="normal" font-style="normal" text-anchor="start"></text><text x="8" y="98.0" font-size="2.4" fill="#5d6a75" font-weight="normal" font-style="normal" text-anchor="start">Форма</text><text x="100" y="18.0" font-size="2.4" fill="#5d6a75" font-weight="normal" font-style="normal" text-anchor="end">Режим</text><text x="100" y="25.8" font-size="2.4" fill="#5d6a75" font-weight="normal" font-style="normal" text-anchor="end"></text><text x="100" y="33.6" font-size="2.4" fill="#5d6a75" font-weight="normal" font-style="normal" text-anchor="end">Тривалість</text><text x="100" y="41.4" font-size="2.4" fill="#5d6a75" font-weight="normal" font-style="normal" text-anchor="end">курсу</text><text x="100" y="49.2" font-size="2.4" fill="#5d6a75" font-weight="normal" font-style="normal" text-anchor="end"></text><text x="100" y="57.0" font-size="2.4" fill="#5d6a75" font-weight="normal" font-style="normal" text-anchor="end">Протипоказ</text><text x="100" y="64.8" font-size="2.4" fill="#5d6a75" font-weight="normal" font-style="normal" text-anchor="end"></text><text x="100" y="72.6" font-size="2.4" fill="#5d6a75" font-weight="normal" font-style="normal" text-anchor="end">Взаємодія</text><text x="100" y="80.4" font-size="2.4" fill="#5d6a75" font-weight="normal" font-style="normal" text-anchor="end"></text><text x="100" y="88.2" font-size="2.4" fill="#5d6a75" font-weight="normal" font-style="normal" text-anchor="end">Особливі</text><text x="100" y="96.0" font-size="2.4" fill="#5d6a75" font-weight="normal" font-style="normal" text-anchor="end">вказівки</text></svg><div class="abs" style="left:0;top:27px;width:100px;text-align:center;font:20.500px/24px 'Liberation Sans',sans-serif;color:#f2f2f2;text-shadow:0 1px 3px rgba(0,0,0,.5)">Ещё</div></div>
<!--/THUMBS-->
<div id="pfoot"><span style="left:0">Изображения могут быть защищены авторским правом.</span><span style="left:366px">-</span><span style="left:379px;color:#9a9a9a">Отправить отзыв</span></div>
<div class="nav" style="left:-1px"><svg class="abs" style="left:10px;top:31px" width="20" height="32" viewBox="0 0 20 32"><path d="M17.500 2L3 16l14.500 14" fill="none" stroke="#a8a8a8" stroke-width="2.400" stroke-linecap="round"/></svg></div>
<div class="nav" style="left:1222.500px;width:42px"><svg class="abs" style="left:9px;top:31px" width="20" height="32" viewBox="0 0 20 32"><path d="M2.500 2L17 16 2.500 30" fill="none" stroke="#a8a8a8" stroke-width="2.400" stroke-linecap="round"/></svg></div>
</div>
  </div>
  <div id="vscroll"><svg class="abs" style="left:4px;top:7px" width="9" height="6" viewBox="0 0 9 6"><path d="M0 5.500L4.500 0.500 9 5.500z" fill="#505050"/></svg><div class="abs" style="left:2px;top:26px;width:13px;height:27px;background:#bcbcbc;border:1px solid #a8a8a8"></div><svg class="abs" style="left:4px;top:828px" width="9" height="6" viewBox="0 0 9 6"><path d="M0 0.500L4.500 5.500 9 0.500z" fill="#505050"/></svg></div>
  <div id="hscroll"><svg class="abs" style="left:5px;top:4px" width="6" height="9" viewBox="0 0 6 9"><path d="M5.500 0L0.500 4.500 5.500 9z" fill="#a3a3a3"/></svg><div class="abs" style="left:17px;top:2px;width:1147px;height:13px;background:#bcbcbc;border:1px solid #b0b0b0"></div><svg class="abs" style="left:1251px;top:4px" width="6" height="9" viewBox="0 0 6 9"><path d="M0.500 0L5.500 4.500 0.500 9z" fill="#505050"/></svg></div>
  <div id="dl"><div class="dli" style="left:3px;width:205px"><svg class="ic" viewBox="0 0 16 16"><rect x="0.500" y="1.500" width="15" height="13" fill="#fff" stroke="#d6d0c4" stroke-width=".6"/><rect x="1.500" y="2.500" width="13" height="6" fill="#3b86d8"/><path d="M1.500 8.500c3-2 5-1 7 0s4-2 6-1.500V9.500h-13z" fill="#2f9a5a"/><rect x="1.500" y="9" width="13" height="4.500" fill="#e8c878"/></svg><div class="nm">13373655494930.jpg</div><div class="sep"></div><div class="ar"></div></div><div class="dli" style="left:211px;width:205px"><svg class="ic" viewBox="0 0 16 16"><rect x="0.500" y="1.500" width="15" height="13" fill="#fff" stroke="#d6d0c4" stroke-width=".6"/><rect x="1.500" y="2.500" width="13" height="6" fill="#3b86d8"/><path d="M1.500 8.500c3-2 5-1 7 0s4-2 6-1.500V9.500h-13z" fill="#2f9a5a"/><rect x="1.500" y="9" width="13" height="4.500" fill="#e8c878"/></svg><div class="nm">4-465.jpg</div><div class="sep"></div><div class="ar"></div></div><div class="dli" style="left:419px;width:205px"><svg class="ic" viewBox="0 0 16 16"><path d="M3.500 1.500h7l3 3v10h-10z" fill="#fff" stroke="#7a8aa8" stroke-width=".9"/><rect x="1" y="4" width="9" height="8" fill="#2a5699"/><text x="5.500" y="10.600" font-size="7" font-weight="bold" font-family="Liberation Sans,sans-serif" fill="#fff" text-anchor="middle">W</text></svg><div class="nm">20121202-170956.doc</div><div class="sep"></div><div class="ar"></div></div><div class="dli" style="left:627px;width:205px"><svg class="ic" viewBox="0 0 16 16"><path d="M3.500 1.500h7l3 3v10h-10z" fill="#fff" stroke="#a87a6a" stroke-width=".9"/><rect x="1" y="3" width="10" height="9" fill="#d24726"/><circle cx="6" cy="7.500" r="3" fill="#f6d5c8"/><path d="M6 7.500V4.500A3 3 0 0 1 9 7.500z" fill="#fff"/></svg><div class="nm">ревматоїдний артр....ppt</div><div class="sep"></div><div class="ar"></div></div><div class="dli" style="left:835px;width:205px"><svg class="ic" viewBox="0 0 16 16"><path d="M3.500 1.500h7l3 3v10h-10z" fill="#fff" stroke="#a87a6a" stroke-width=".9"/><rect x="1" y="3" width="10" height="9" fill="#d24726"/><circle cx="6" cy="7.500" r="3" fill="#f6d5c8"/><path d="M6 7.500V4.500A3 3 0 0 1 9 7.500z" fill="#fff"/></svg><div class="nm">lect-13.ppt</div><div class="sep"></div><div class="ar"></div></div><svg class="abs" style="left:1059px;top:14px" width="14" height="14" viewBox="0 0 14 14"><path d="M4.500 1h5v5.500H13L7 12.500 1 6.500h3.500z" fill="#5a5a5a"/></svg><div class="abs" style="left:1080px;top:13px;font:11.2px 'DejaVu Sans Condensed','DejaVu Sans','Liberation Sans',sans-serif;color:#111;text-decoration:underline;white-space:nowrap">Показати всі завантаження...</div><svg class="abs" style="left:1256px;top:16px" width="9" height="9" viewBox="0 0 9 9"><path d="M1 1l7 7M8 1l-7 7" stroke="#4a4a4a" stroke-width="1.800"/></svg></div>
</div>
</body>
</html>
